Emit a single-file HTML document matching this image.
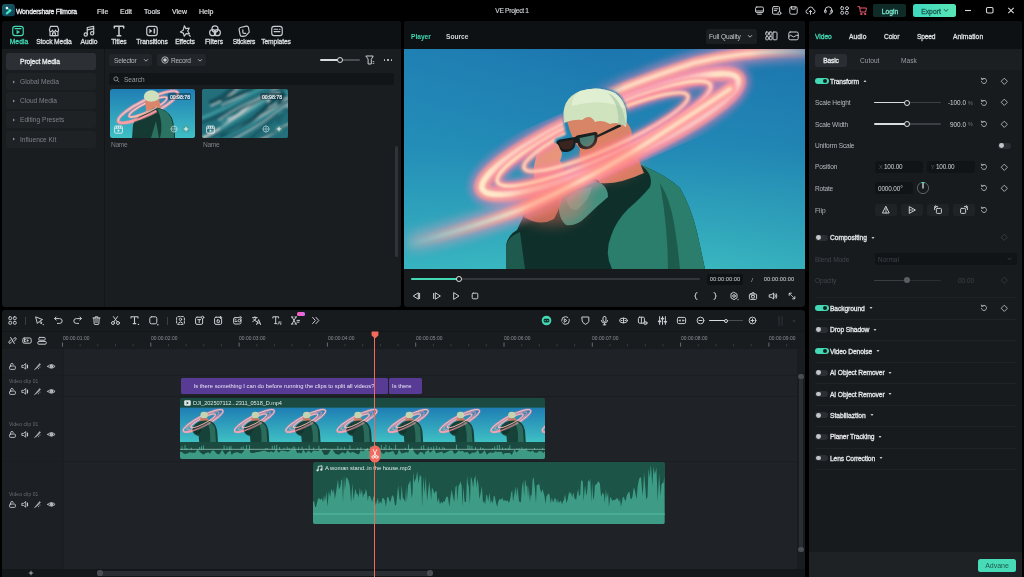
<!DOCTYPE html><html><head><meta charset="utf-8"><title>VE Project 1</title><style>
*{box-sizing:border-box;margin:0;padding:0}
html,body{width:1024px;height:577px;overflow:hidden;background:#000}
body{position:relative;font-family:"Liberation Sans",sans-serif;color:#cfd2d5;font-size:7px;line-height:1}
.abs{position:absolute}
.t{position:absolute;white-space:nowrap;line-height:10px;height:10px;will-change:transform}
.panel{position:absolute;background:#15181b;border-radius:3px;overflow:hidden}
svg{position:absolute;overflow:visible}
.ic{stroke:#c9ccd0;fill:none;stroke-width:1;stroke-linecap:round;stroke-linejoin:round}
</style></head><body>
<svg width="0" height="0" style="position:absolute"><defs>
<linearGradient id="sky" x1="0" y1="0" x2="0" y2="1"><stop offset="0" stop-color="#1c76af"/><stop offset=".45" stop-color="#2288b5"/><stop offset="1" stop-color="#3bbac0"/></linearGradient>
<linearGradient id="sky2" x1="0" y1="0" x2="1" y2="0"><stop offset="0" stop-color="#2aa0c0" stop-opacity=".25"/><stop offset=".5" stop-color="#2aa0c0" stop-opacity="0"/><stop offset="1" stop-color="#1a70a8" stop-opacity=".15"/></linearGradient>
<filter id="b1" x="-20%" y="-20%" width="140%" height="140%"><feGaussianBlur stdDeviation=".8"/></filter>
<filter id="b15" x="-20%" y="-20%" width="140%" height="140%"><feGaussianBlur stdDeviation="1.4"/></filter>
<linearGradient id="gBL" x1="0" y1="0" x2="401" y2="0" gradientUnits="userSpaceOnUse"><stop offset="0" stop-color="#fff" stop-opacity="0"/><stop offset=".1" stop-color="#fff" stop-opacity=".4"/><stop offset=".3" stop-color="#fff" stop-opacity="1"/><stop offset="1" stop-color="#fff"/></linearGradient>
<linearGradient id="gTR" x1="0" y1="0" x2="401" y2="0" gradientUnits="userSpaceOnUse"><stop offset=".4" stop-color="#fff" stop-opacity="0"/><stop offset=".55" stop-color="#fff" stop-opacity="1"/><stop offset=".86" stop-color="#fff" stop-opacity="1"/><stop offset="1" stop-color="#fff" stop-opacity=".35"/></linearGradient>
<mask id="mBL" maskUnits="userSpaceOnUse" x="-20" y="-20" width="441" height="260"><rect x="-20" y="-20" width="441" height="260" fill="url(#gBL)"/></mask>
<mask id="mTR" maskUnits="userSpaceOnUse" x="-20" y="-20" width="441" height="260"><rect x="-20" y="-20" width="441" height="260" fill="url(#gTR)"/></mask>
<filter id="b2" x="-20%" y="-20%" width="140%" height="140%"><feGaussianBlur stdDeviation="1.8"/></filter>
<filter id="b3" x="-20%" y="-20%" width="140%" height="140%"><feGaussianBlur stdDeviation="3"/></filter>
<filter id="b4" x="-20%" y="-20%" width="140%" height="140%"><feGaussianBlur stdDeviation="4"/></filter>
<filter id="b6" x="-50%" y="-50%" width="200%" height="200%"><feGaussianBlur stdDeviation="7"/></filter>
<mask id="headmask" maskUnits="userSpaceOnUse" x="0" y="0" width="401" height="220"><rect width="401" height="220" fill="#fff"/><path d="M160 76 Q155 50 176 41 Q194 35 212 43 Q227 54 223 80 L218 84 L194 94 Q190 102 180 103 Q168 104 156 103 Q150 100 151 90 L162 86 Z" fill="#000" filter="url(#b1)"/></mask>
<linearGradient id="sky3" x1="0" y1="0" x2="0" y2="1"><stop offset="0" stop-color="#1f7eb4"/><stop offset="1" stop-color="#3fc0c4"/></linearGradient><filter id="bt" x="-20%" y="-50%" width="140%" height="200%"><feGaussianBlur stdDeviation=".7"/></filter>

<symbol id="scene" viewBox="0 0 401 220" preserveAspectRatio="none">
<rect width="401" height="220" fill="url(#sky)"/>
<rect width="401" height="220" fill="url(#sky2)"/>

<g>
<path d="M102 220 L102 196 Q104 186 113 181 L120 166 Q124 150 131 140 L160 138 Q175 132 190 126 L237 116 Q262 126 276 139 Q287 158 293 183 L301 220 Z" fill="#0e2f2a"/>
<path d="M237 116 Q262 126 276 139 Q287 158 293 183 L301 220 L208 220 Q200 204 207 187 Q212 172 224 160 Q238 148 246 138 Q250 126 237 116Z" fill="#2b7d6c"/>
<path d="M256 134 Q266 150 270 174 Q274 198 276 220 L264 220 Q264 180 256 134Z" fill="#1b5548" opacity=".85"/>
<path d="M156 146 Q170 134 192 132 Q204 136 204 148 Q192 158 182 168 Q172 178 162 176 Q152 168 156 146Z" fill="#43907f"/>
<path d="M162 150 Q172 140 188 138 Q186 150 174 160 Q166 164 162 150Z" fill="#5fae9a" opacity=".7"/>
<path d="M102 196 Q106 186 116 183 L121 220 L102 220Z" fill="#1f5a4e"/>
<path d="M188 112 L234 108 Q238 120 240 124 Q214 136 196 134 Q188 126 188 112Z" fill="#d27d62"/>
<path d="M163 72 Q162 52 176 45 Q192 38 208 44 Q222 52 222 72 L226 78 Q230 86 226 96 L226 112 Q214 126 198 130 Q186 130 180 118 Q174 110 176 100 Q168 92 163 72Z" fill="#d88466"/>
<path d="M160 74 Q156 50 176 42 Q194 36 211 44 Q226 54 222 78 Q214 72 206 75 Q198 70 191 73 Q186 64 178 71 Q170 70 160 74Z" fill="#cfe3bf"/>
<path d="M176 42 Q194 36 211 44 Q219 50 221 60 Q200 48 168 57 Q167 48 176 42Z" fill="#e4f0d6" opacity=".8"/>
<path d="M152.5 95 Q152 91 156 90.5 L171 88 L173 86.5 L191 83 Q194 83 193.5 86 L216 75 L217 77.5 L193.5 88.5 Q193 98 184 100 Q175 101.5 173.5 94 L171.5 94 Q171 102 163 103 Q153 104 152.5 95Z" fill="#141d1d"/>
<path d="M175.5 89 L190.5 86 Q191.5 95 184 97.5 Q176 98.5 175.5 89Z" fill="#3d7d74"/>
<path d="M155 93 L169.5 90.5 Q169.5 99.5 163 100.5 Q155.5 101 155 93Z" fill="#3a2420"/>
<path d="M222 76 Q218 50 204 44 Q216 56 214 76Z" fill="#a9c8a8" opacity=".7"/>
<path d="M131 140 Q128 120 132 108 Q136 96 146 94 Q154 92 156 100 Q160 104 156 112 Q162 118 158 126 Q156 136 160 140 Z" fill="#e8957c"/>
<path d="M120 168 Q124 150 131 140 L160 138 Q158 156 150 170 Q136 178 120 168Z" fill="#c9705c" opacity=".85"/>
</g>
<g mask="url(#headmask)"><g opacity="1"><ellipse cx="206" cy="85" rx="139" ry="27" transform="rotate(-23.3 206 85)" fill="none" stroke="#f77fb8" stroke-width="25.0" filter="url(#b3)" opacity=".5"/><ellipse cx="206" cy="85" rx="139" ry="27" transform="rotate(-23.3 206 85)" fill="none" stroke="#ff9c98" stroke-width="15.625" filter="url(#b2)" opacity=".9"/><ellipse cx="206" cy="85" rx="139" ry="27" transform="rotate(-23.3 206 85)" fill="none" stroke="#ffe9c8" stroke-width="6.25" filter="url(#b1)"/></g><g opacity="1"><ellipse cx="200" cy="84.5" rx="117" ry="22" transform="rotate(-24.5 200 84.5)" fill="none" stroke="#f77fb0" stroke-width="10.8" filter="url(#b3)" opacity=".5"/><ellipse cx="200" cy="84.5" rx="117" ry="22" transform="rotate(-24.5 200 84.5)" fill="none" stroke="#ff9c94" stroke-width="6.75" filter="url(#b2)" opacity=".9"/><ellipse cx="200" cy="84.5" rx="117" ry="22" transform="rotate(-24.5 200 84.5)" fill="none" stroke="#ffe9c8" stroke-width="2.7" filter="url(#b1)"/></g><g opacity="1"><ellipse cx="202" cy="83" rx="89.5" ry="16.5" transform="rotate(-23.9 202 83)" fill="none" stroke="#f77fb0" stroke-width="8.4" filter="url(#b3)" opacity=".5"/><ellipse cx="202" cy="83" rx="89.5" ry="16.5" transform="rotate(-23.9 202 83)" fill="none" stroke="#ff9c94" stroke-width="5.25" filter="url(#b2)" opacity=".9"/><ellipse cx="202" cy="83" rx="89.5" ry="16.5" transform="rotate(-23.9 202 83)" fill="none" stroke="#ffe9c8" stroke-width="2.1" filter="url(#b1)"/></g><path d="M250 28 Q300 10 345 4 Q375 1 400 2" fill="none" stroke="#ffb0c8" stroke-width="12" stroke-linecap="round" opacity=".35" filter="url(#b6)"/><g opacity="1" mask="url(#mTR)"><path d="M168 62 Q215 38 290 14 Q345 0 404 3" fill="none" stroke-linecap="round" stroke="#f587b8" stroke-width="19.5" filter="url(#b4)" opacity=".55"/><path d="M168 62 Q215 38 290 14 Q345 0 404 3" fill="none" stroke-linecap="round" stroke="#ffa09a" stroke-width="11.25" filter="url(#b2)" opacity=".9"/><path d="M168 62 Q215 38 290 14 Q345 0 404 3" fill="none" stroke-linecap="round" stroke="#ffe2c6" stroke-width="4.125" filter="url(#b15)"/></g><path d="M10 192 Q70 178 118 160 Q160 143 190 126" fill="none" stroke="#ffb0c0" stroke-width="16" stroke-linecap="round" opacity=".38" filter="url(#b6)"/><g opacity="1" mask="url(#mBL)"><path d="M6 195 Q70 178 118 160 Q190 128 246 92 Q290 64 326 40" fill="none" stroke-linecap="round" stroke="#f587b8" stroke-width="20.8" filter="url(#b4)" opacity=".55"/><path d="M6 195 Q70 178 118 160 Q190 128 246 92 Q290 64 326 40" fill="none" stroke-linecap="round" stroke="#ffa09a" stroke-width="12.0" filter="url(#b2)" opacity=".9"/><path d="M6 195 Q70 178 118 160 Q190 128 246 92 Q290 64 326 40" fill="none" stroke-linecap="round" stroke="#ffe2c6" stroke-width="4.4" filter="url(#b15)"/></g></g><ellipse cx="148" cy="152" rx="36" ry="24" fill="#ff7a66" opacity=".4" filter="url(#b6)"/><ellipse cx="205" cy="110" rx="32" ry="20" fill="#ff7a66" opacity=".35" filter="url(#b6)"/></symbol>
<symbol id="tscene" viewBox="0 0 52 34" preserveAspectRatio="none">
<rect width="52" height="34" fill="url(#sky3)"/>
<g transform="rotate(-27 24 13)" fill="none">
<ellipse cx="24" cy="13" rx="22.5" ry="5" stroke="#ff8fb0" stroke-width="2" opacity=".75" filter="url(#bt)"/>
<ellipse cx="24" cy="13" rx="22.5" ry="5" stroke="#ffd6cc" stroke-width=".7"/>
<ellipse cx="24" cy="13" rx="18" ry="3.9" stroke="#ff9aa8" stroke-width="1.2" opacity=".7" filter="url(#bt)"/>
<ellipse cx="24" cy="13" rx="14" ry="2.9" stroke="#ff8fa8" stroke-width="1.5" opacity=".8" filter="url(#bt)"/>
<ellipse cx="24" cy="13" rx="14" ry="2.9" stroke="#ffd6cc" stroke-width=".6"/>
</g>
<ellipse cx="25" cy="7.2" rx="3.8" ry="3.3" fill="#c3d4b0"/>
<path d="M21.5 10 Q25 11.5 28.5 10 L29.5 13 L20.5 14Z" fill="#c97a60"/>
<path d="M13 22 Q14 16 21 13.5 Q27 11.5 33 14 Q38 17 38.5 26 L39 34 L20 34 L19.5 28 Q14 27 13 22Z" fill="#174239"/>
<path d="M28 14 Q33.5 14.5 36 20 L37 34 L31 34 Q32 22 28 14Z" fill="#2a6b5c"/>
<path d="M13.5 21 Q17 17 22 17 Q24 22 20 26 Q14 26 13.5 21Z" fill="#12362f"/>
<g transform="rotate(-27 24 13)" fill="none" opacity=".9"><path d="M1.5 13 A22.5 5 0 0 0 30 17.8" stroke="#ff9aa8" stroke-width="1.3" filter="url(#bt)"/><path d="M10 13 A14 2.9 0 0 0 30 15.6" stroke="#ffb8b0" stroke-width="1"/></g>
</symbol></defs></svg>
<!-- title bar -->
<svg style="left:1.6px;top:3.7px" width="13" height="12.3" viewBox="0 0 13 12.3"><defs><linearGradient id="lg" x1="0" y1="0" x2="1" y2="1"><stop offset="0" stop-color="#1a5f6a"/><stop offset="1" stop-color="#123f55"/></linearGradient></defs><rect width="13" height="12.3" rx="3" fill="url(#lg)"/><path d="M4.9 4.2 L8.4 6.4" stroke="#2aa99a" stroke-width="2" stroke-linecap="round"/><path d="M8.4 6.4 L4.8 9.3" stroke="#43e8c2" stroke-width="2.2" stroke-linecap="round"/><circle cx="4.9" cy="4.1" r="1.25" fill="#f2fffb"/></svg>
<div class="t" style="left:16.2px;top:7px;font-size:6.8px;color:#eceef0;font-weight:normal;letter-spacing:-0.235px;-webkit-text-stroke:0.3px #eceef0;">Wondershare Filmora</div>
<div class="t" style="left:97px;top:7px;font-size:7px;color:#e0e2e4;font-weight:normal;-webkit-text-stroke:0.15px #e0e2e4;">File</div>
<div class="t" style="left:120px;top:7px;font-size:7px;color:#e0e2e4;font-weight:normal;-webkit-text-stroke:0.15px #e0e2e4;">Edit</div>
<div class="t" style="left:144px;top:7px;font-size:7px;color:#e0e2e4;font-weight:normal;-webkit-text-stroke:0.15px #e0e2e4;">Tools</div>
<div class="t" style="left:172px;top:7px;font-size:7px;color:#e0e2e4;font-weight:normal;-webkit-text-stroke:0.15px #e0e2e4;">View</div>
<div class="t" style="left:198.5px;top:7px;font-size:7px;color:#e0e2e4;font-weight:normal;-webkit-text-stroke:0.15px #e0e2e4;">Help</div>
<div class="t" style="left:361.66313932291666px;width:300px;text-align:center;top:6px;font-size:6.6px;color:#d0d3d6;font-weight:normal;letter-spacing:-0.274px;-webkit-text-stroke:0.15px #d0d3d6;">VE Project 1</div>
<div class="abs" style="left:873px;top:4px;width:33px;height:13px;background:#0f2b27;border-radius:2px;"></div>
<div class="t" style="left:739.5px;width:300px;text-align:center;top:7px;font-size:6.8px;color:#7be6cb;font-weight:normal;-webkit-text-stroke:0.3px #7be6cb;">Login</div>
<div class="abs" style="left:912.5px;top:4px;width:43px;height:13px;background:linear-gradient(90deg,#3fd9c0,#58e6b4);border-radius:2.5px;"></div>
<div class="t" style="left:781px;width:300px;text-align:center;top:7px;font-size:6.8px;color:#1d5a4e;font-weight:normal;-webkit-text-stroke:0.3px #1d5a4e;">Export</div>
<svg style="left:943px;top:8px" width="6" height="5" viewBox="0 0 6 5"><path d="M1 1.2 L3 3.4 L5 1.2" stroke="#1d5a4e" stroke-width="1" fill="none"/></svg>
<svg style="left:960px;top:2px" width="60" height="17" viewBox="960 2 60 17"><path d="M965 10.5 H971" stroke="#d6d8da" stroke-width="1.1"/><rect x="986.5" y="7.5" width="6.5" height="5.5" rx="1.2" stroke="#d6d8da" stroke-width="1.1" fill="none"/><path d="M1008.3 7.8 L1013.7 13.2 M1013.7 7.8 L1008.3 13.2" stroke="#d6d8da" stroke-width="1.1"/></svg>
<svg style="left:753.5px;top:5px" width="11" height="11" viewBox="0 0 11 11" class="ic" stroke="#c9ccd0" stroke-width=".9"><rect x="1.6" y="2" width="7.8" height="5.6" rx="1.2"/><path d="M3.6 9.2 H7.4 M1.6 6 H9.4"/></svg>
<svg style="left:770.5px;top:5px" width="11" height="11" viewBox="0 0 11 11" class="ic" stroke="#c9ccd0" stroke-width=".9"><rect x="1.6" y="1.6" width="7" height="7.6" rx="1.2"/><path d="M3.2 3.8 H7 M3.2 5.6 H5.6"/><circle cx="8.4" cy="8.2" r="1.5" fill="#000"/></svg>
<svg style="left:787.5px;top:5px" width="11" height="11" viewBox="0 0 11 11" class="ic" stroke="#c9ccd0" stroke-width=".9"><rect x="1.8" y="1.8" width="7.4" height="7.4" rx="1.6"/><path d="M3.6 1.8 V4.2 H7.2 V1.8"/></svg>
<svg style="left:805.2px;top:5px" width="11" height="11" viewBox="0 0 11 11" class="ic" stroke="#c9ccd0" stroke-width=".9"><path d="M3 8.6 Q1 8.6 1 6.6 Q1 4.8 2.8 4.6 Q3.2 2 5.6 2 Q8 2 8.3 4.4 Q10 4.6 10 6.6 Q10 8.6 8 8.6"/><path d="M5.5 9.4 V5.6 M4.2 6.8 L5.5 5.5 L6.8 6.8"/></svg>
<svg style="left:822.5px;top:5px" width="11" height="11" viewBox="0 0 11 11" class="ic" stroke="#c9ccd0" stroke-width=".9"><path d="M2.2 6 V5 Q2.2 1.8 5.5 1.8 Q8.8 1.8 8.8 5 V6"/><rect x="1.6" y="5" width="1.6" height="2.8" rx=".7"/><rect x="7.8" y="5" width="1.6" height="2.8" rx=".7"/><path d="M8.6 7.8 Q8.6 9.2 6.4 9.2"/></svg>
<svg style="left:839.0px;top:5px" width="11" height="11" viewBox="0 0 11 11" class="ic" stroke="#c9ccd0" stroke-width=".9"><rect x="1.8" y="1.8" width="2.8" height="2.8" rx=".9"/><circle cx="8" cy="3.2" r="1.5"/><rect x="1.8" y="6.4" width="2.8" height="2.8" rx=".9"/><rect x="6.4" y="6.4" width="2.8" height="2.8" rx=".9"/></svg>
<svg style="left:856.5px;top:5px" width="11" height="11" viewBox="0 0 11 11" fill="none" stroke="url(#cartg)" stroke-width="1" stroke-linecap="round" stroke-linejoin="round"><defs><linearGradient id="cartg" x1="0" y1="0" x2="1" y2="1" gradientUnits="userSpaceOnUse"><stop offset="0" stop-color="#ff5a8a"/><stop offset="1" stop-color="#ff8a4a"/></linearGradient></defs><path d="M1 1.6 H2.6 L3.4 7 H8.6 L9.4 3 H3" stroke="#f0566e"/><circle cx="4.2" cy="9" r=".7" stroke="#f0566e"/><circle cx="8" cy="9" r=".7" stroke="#f0566e"/></svg>
<!-- media panel -->
<div class="panel" style="left:2px;top:21px;width:399px;height:285.5px;background:#1a1d20"></div>
<div class="abs" style="left:2px;top:21px;width:399px;height:28px;background:#0e1114;border-radius:0px;border-radius:3px 3px 0 0"></div>
<div class="t" style="left:-131.2649125px;width:300px;text-align:center;top:37px;font-size:6.7px;color:#42d9b4;font-weight:normal;letter-spacing:0.070px;-webkit-text-stroke:0.3px #42d9b4;">Media</div>
<div class="t" style="left:-96.26214879261363px;width:300px;text-align:center;top:37px;font-size:6.7px;color:#dcdfe2;font-weight:normal;letter-spacing:-0.124px;-webkit-text-stroke:0.3px #dcdfe2;">Stock Media</div>
<div class="t" style="left:-61.413682031250005px;width:300px;text-align:center;top:37px;font-size:6.7px;color:#dcdfe2;font-weight:normal;letter-spacing:-0.027px;-webkit-text-stroke:0.3px #dcdfe2;">Audio</div>
<div class="t" style="left:-31.138261067708328px;width:300px;text-align:center;top:37px;font-size:6.7px;color:#dcdfe2;font-weight:normal;letter-spacing:-0.077px;-webkit-text-stroke:0.3px #dcdfe2;">Titles</div>
<div class="t" style="left:1.649109019886339px;width:300px;text-align:center;top:37px;font-size:6.7px;color:#dcdfe2;font-weight:normal;letter-spacing:-0.102px;-webkit-text-stroke:0.3px #dcdfe2;">Transitions</div>
<div class="t" style="left:34.53867299107142px;width:300px;text-align:center;top:37px;font-size:6.7px;color:#dcdfe2;font-weight:normal;letter-spacing:-0.123px;-webkit-text-stroke:0.3px #dcdfe2;">Effects</div>
<div class="t" style="left:64.48291573660714px;width:300px;text-align:center;top:37px;font-size:6.7px;color:#dcdfe2;font-weight:normal;letter-spacing:-0.034px;-webkit-text-stroke:0.3px #dcdfe2;">Filters</div>
<div class="t" style="left:94.11082031249998px;width:300px;text-align:center;top:37px;font-size:6.7px;color:#dcdfe2;font-weight:normal;letter-spacing:-0.178px;-webkit-text-stroke:0.3px #dcdfe2;">Stickers</div>
<div class="t" style="left:126.45350998263888px;width:300px;text-align:center;top:37px;font-size:6.7px;color:#dcdfe2;font-weight:normal;letter-spacing:-0.093px;-webkit-text-stroke:0.3px #dcdfe2;">Templates</div>
<svg style="left:11.399999999999999px;top:23.5px" width="14" height="14" viewBox="0 0 12 12" class="ic" stroke="#d3d6d9" stroke-width=".95"><rect x="1.5" y="2" width="9" height="8" rx="2" stroke="#42d9b4"/><path d="M3.5 4 H8.5" stroke="#42d9b4"/><path d="M5.2 5.6 L7.4 6.9 L5.2 8.2 Z" fill="#42d9b4" stroke="#42d9b4" stroke-width=".5"/></svg>
<svg style="left:46.6px;top:23.5px" width="14" height="14" viewBox="0 0 12 12" class="ic" stroke="#d3d6d9" stroke-width=".95"><path d="M2 5 L3 2 H9 L10 5 Q10 6.5 8.7 6.5 Q7.4 6.5 7.3 5.2 Q7.2 6.5 6 6.5 Q4.8 6.5 4.7 5.2 Q4.6 6.5 3.3 6.5 Q2 6.5 2 5 Z"/><path d="M2.6 6.5 V10 H9.4 V6.5"/><rect x="4.8" y="7.6" width="2.4" height="2.4"/></svg>
<svg style="left:81.5px;top:23.5px" width="14" height="14" viewBox="0 0 12 12" class="ic" stroke="#d3d6d9" stroke-width=".95"><path d="M4.5 9 V3 L10 2 V8"/><circle cx="3.2" cy="9" r="1.4"/><circle cx="8.7" cy="8" r="1.4"/><path d="M4.5 5 L10 4"/></svg>
<svg style="left:111.9px;top:23.5px" width="14" height="14" viewBox="0 0 12 12" class="ic" stroke="#d3d6d9" stroke-width=".95"><path d="M2 3.5 V2 H10 V3.5 M6 2 V10 M4.5 10 H7.5" stroke-width="1.3"/></svg>
<svg style="left:144.5px;top:23.5px" width="14" height="14" viewBox="0 0 12 12" class="ic" stroke="#d3d6d9" stroke-width=".95"><rect x="1.5" y="2" width="9" height="8" rx="2"/><path d="M4 4.5 L6 6 L4 7.5 Z" fill="#d3d6d9" stroke-width=".4"/><path d="M8 4.3 V7.7" stroke-width="1.3"/></svg>
<svg style="left:177.6px;top:23.5px" width="14" height="14" viewBox="0 0 12 12" class="ic" stroke="#d3d6d9" stroke-width=".95"><path d="M5.5 1.5 L6.8 4 L9.6 3.6 L8.3 6 L9.8 8.4 L7 8.2 L5.4 10.5 L4.6 7.8 L2 6.8 L4.4 5.4 Z"/><path d="M9.5 9.5 L10.5 10.5" /></svg>
<svg style="left:207.5px;top:23.5px" width="14" height="14" viewBox="0 0 12 12" class="ic" stroke="#d3d6d9" stroke-width=".95"><circle cx="6" cy="4.2" r="2.6"/><circle cx="4" cy="7.4" r="2.6"/><circle cx="8" cy="7.4" r="2.6"/></svg>
<svg style="left:237.4px;top:23.5px" width="14" height="14" viewBox="0 0 12 12" class="ic" stroke="#d3d6d9" stroke-width=".95"><path d="M3 3 L8 1.8 Q9.5 1.6 9.8 3 L10.5 7 L7.5 10.2 L4.5 10.6 Q3 10.8 2.7 9.4 L1.8 4.8 Q1.6 3.4 3 3 Z"/><path d="M5 5 V7 Q5 8 6 8 H7.5"/></svg>
<svg style="left:269.5px;top:23.5px" width="14" height="14" viewBox="0 0 12 12" class="ic" stroke="#d3d6d9" stroke-width=".95"><rect x="1.5" y="2" width="9" height="8" rx="2"/><path d="M3.5 4.5 H6.5 M3.5 6.5 H8.5 M8 4.5 H8.6" /></svg>
<div class="abs" style="left:104px;top:49px;width:1px;height:257.5px;background:#131619;border-radius:0px;"></div>
<div class="abs" style="left:6px;top:53px;width:90px;height:17px;background:#2c3034;border-radius:3px;"></div>
<div class="t" style="left:20px;top:57px;font-size:6.7px;color:#e8eaec;font-weight:normal;letter-spacing:-0.074px;-webkit-text-stroke:0.3px #e8eaec;">Project Media</div>
<div class="abs" style="left:6px;top:73px;width:90px;height:17px;background:#1f2225;border-radius:3px;"></div>
<div class="t" style="left:20px;top:77px;font-size:6.6px;color:#7d8288;font-weight:normal;">Global Media</div>
<svg style="left:12px;top:79.5px" width="4" height="4" viewBox="0 0 4 4"><path d="M1 .6 L3 2 L1 3.4 Z" fill="#8a8f95"/></svg>
<div class="abs" style="left:6px;top:92px;width:90px;height:17px;background:#1f2225;border-radius:3px;"></div>
<div class="t" style="left:20px;top:96px;font-size:6.6px;color:#7d8288;font-weight:normal;">Cloud Media</div>
<svg style="left:12px;top:98.5px" width="4" height="4" viewBox="0 0 4 4"><path d="M1 .6 L3 2 L1 3.4 Z" fill="#8a8f95"/></svg>
<div class="abs" style="left:6px;top:111px;width:90px;height:17px;background:#1f2225;border-radius:3px;"></div>
<div class="t" style="left:20px;top:115px;font-size:6.6px;color:#7d8288;font-weight:normal;">Editing Presets</div>
<svg style="left:12px;top:117.5px" width="4" height="4" viewBox="0 0 4 4"><path d="M1 .6 L3 2 L1 3.4 Z" fill="#8a8f95"/></svg>
<div class="abs" style="left:6px;top:130.5px;width:90px;height:17px;background:#1f2225;border-radius:3px;"></div>
<div class="t" style="left:20px;top:135px;font-size:6.6px;color:#7d8288;font-weight:normal;">Influence Kit</div>
<svg style="left:12px;top:137.0px" width="4" height="4" viewBox="0 0 4 4"><path d="M1 .6 L3 2 L1 3.4 Z" fill="#8a8f95"/></svg>
<div class="abs" style="left:109.4px;top:53.7px;width:42.3px;height:12.6px;background:#22262a;border-radius:2.5px;"></div>
<div class="t" style="left:114px;top:56px;font-size:6.6px;color:#b4b8bc;font-weight:normal;letter-spacing:-0.202px;">Selector</div>
<svg style="left:142.6px;top:57.6px" width="6" height="5" viewBox="0 0 6 5"><path d="M1 1.2 L3 3.2 L5 1.2" stroke="#b4b8bc" stroke-width=".9" fill="none"/></svg>
<div class="abs" style="left:156.6px;top:53.7px;width:49px;height:12.6px;background:#22262a;border-radius:2.5px;"></div>
<svg style="left:160.7px;top:56px" width="8" height="8" viewBox="0 0 8 8"><circle cx="4" cy="4" r="3.2" stroke="#c9ccd0" stroke-width=".8" fill="none"/><circle cx="4" cy="4" r="1.8" fill="#c9ccd0"/></svg>
<div class="t" style="left:171.4px;top:56px;font-size:6.6px;color:#b4b8bc;font-weight:normal;letter-spacing:-0.279px;">Record</div>
<svg style="left:196.5px;top:57.6px" width="6" height="5" viewBox="0 0 6 5"><path d="M1 1.2 L3 3.2 L5 1.2" stroke="#b4b8bc" stroke-width=".9" fill="none"/></svg>
<div class="abs" style="left:320px;top:59px;width:20px;height:1.5px;background:#d9dbdd;border-radius:1px;"></div>
<div class="abs" style="left:340px;top:59px;width:20px;height:1.5px;background:#4a4e53;border-radius:1px;"></div>
<div class="abs" style="left:337.3px;top:56.8px;width:6px;height:6px;border-radius:50%;background:#1a1d20;border:1.2px solid #d9dbdd"></div>
<svg style="left:365px;top:55px" width="10" height="10" viewBox="0 0 10 10" class="ic"><path d="M1.2 1 H8.2 L6.3 4.4 V9 H3.1 V4.4 Z" stroke-width="1"/><path d="M8 6.6 h.9 M8 8.4 h.9" stroke-width=".8"/></svg>
<div class="abs" style="left:383.8px;top:59px;width:1.5px;height:1.5px;border-radius:50%;background:#c9ccd0"></div>
<div class="abs" style="left:387.3px;top:59px;width:1.5px;height:1.5px;border-radius:50%;background:#c9ccd0"></div>
<div class="abs" style="left:390.8px;top:59px;width:1.5px;height:1.5px;border-radius:50%;background:#c9ccd0"></div>
<div class="abs" style="left:109px;top:73px;width:285px;height:11.7px;background:#121518;border-radius:2.5px;"></div>
<svg style="left:113px;top:76px" width="7" height="7" viewBox="0 0 7 7"><circle cx="2.9" cy="2.9" r="2" stroke="#9a9ea3" stroke-width=".8" fill="none"/><path d="M4.4 4.4 L6.2 6.2" stroke="#9a9ea3" stroke-width=".8"/></svg>
<div class="t" style="left:123.5px;top:75px;font-size:6.5px;color:#9a9ea3;font-weight:normal;">Search</div>
<div class="abs" style="left:394.8px;top:146px;width:3.2px;height:111px;background:#303438;border-radius:1.6px;"></div>
<div class="abs" style="left:109.6px;top:89.3px;width:85.7px;height:48.4px;border-radius:2.5px;overflow:hidden">
<svg style="left:0;top:0" width="86" height="49" viewBox="0 0 86 49">
<rect width="86" height="49" fill="url(#sky3)"/>
<g transform="rotate(-26 38 18)" fill="none">
<ellipse cx="38" cy="18" rx="33" ry="7.5" stroke="#ff8fa8" stroke-width="3.4" opacity=".75" filter="url(#bt)"/>
<ellipse cx="38" cy="18" rx="33" ry="7.5" stroke="#ffc9c0" stroke-width="1.3" filter="url(#bt)"/>
<ellipse cx="38" cy="18" rx="21" ry="4.4" stroke="#ff8fa8" stroke-width="2.6" opacity=".8" filter="url(#bt)"/>
<ellipse cx="38" cy="18" rx="21" ry="4.4" stroke="#ffd0c0" stroke-width="1"/>
</g>
<ellipse cx="41.5" cy="7.6" rx="7.6" ry="6.4" fill="#cfe0bc"/>
<path d="M35 11 Q42 15 49 10 L51 19 L36 22Z" fill="#d9866a"/>
<path d="M22 49 L23 36 Q25 29 33 25 L45 18 Q57 20 62 29 Q65 38 65 49Z" fill="#143a33"/>
<path d="M47 19 Q57 21 61 29 Q64 38 64 49 L50 49 Q54 34 47 19Z" fill="#2c7263"/>
<path d="M41 49 L46 32 L49 49Z" fill="#2f7d6a" opacity=".8"/>
<g transform="rotate(-26 38 18)" fill="none"><path d="M5 18 A33 7.5 0 0 0 44 25.3" stroke="#ff9aa0" stroke-width="2.4" filter="url(#bt)"/><path d="M17 18 A21 4.4 0 0 0 46 22" stroke="#ffb8a8" stroke-width="1.6" filter="url(#bt)"/></g>
</svg>
</div>
<div class="abs" style="left:201.9px;top:89.3px;width:85.7px;height:48.4px;border-radius:2.5px;overflow:hidden;background:#256f7a">
<svg style="left:0;top:0" width="86" height="49" viewBox="0 0 86 49">
<filter id="bm" x="-20%" y="-20%" width="140%" height="140%"><feGaussianBlur stdDeviation="1"/></filter>
<rect width="86" height="49" fill="#23707c"/>
<g filter="url(#bm)" fill="none" stroke-linecap="round"><path d="M20 47 Q52 41 84 15 T112 8" stroke="#11505b" stroke-width="4.7" opacity="0.91"/><path d="M9 17 Q32 8 56 -21 T74 -25" stroke="#b8bfc0" stroke-width="1.6" opacity="0.90"/><path d="M20 33 Q42 26 63 11 T90 8" stroke="#3b949c" stroke-width="3.5" opacity="0.64"/><path d="M25 69 Q49 56 74 42 T102 35" stroke="#9fb4b6" stroke-width="3.2" opacity="0.94"/><path d="M2 64 Q27 55 53 34 T79 28" stroke="#2f8a94" stroke-width="4.8" opacity="0.79"/><path d="M-7 52 Q18 43 43 20 T67 17" stroke="#c2caca" stroke-width="3.0" opacity="0.94"/><path d="M20 11 Q53 1 85 -19 T112 -25" stroke="#0f4651" stroke-width="3.3" opacity="0.83"/><path d="M28 47 Q50 32 72 18 T89 12" stroke="#9fb4b6" stroke-width="4.7" opacity="0.86"/><path d="M20 16 Q52 1 84 -8 T101 -14" stroke="#c2caca" stroke-width="1.3" opacity="0.92"/><path d="M27 30 Q55 21 83 -9 T106 -17" stroke="#c2caca" stroke-width="3.8" opacity="0.67"/><path d="M19 39 Q40 29 61 12 T83 3" stroke="#3b949c" stroke-width="3.2" opacity="0.73"/><path d="M-8 35 Q26 26 60 9 T89 2" stroke="#0f4651" stroke-width="4.2" opacity="0.60"/><path d="M7 64 Q29 49 52 35 T71 25" stroke="#1b606c" stroke-width="1.8" opacity="0.89"/><path d="M8 69 Q35 60 63 38 T76 33" stroke="#1b606c" stroke-width="3.0" opacity="0.95"/><path d="M15 68 Q43 57 70 34 T91 28" stroke="#1b606c" stroke-width="1.9" opacity="0.58"/><path d="M4 58 Q33 48 62 20 T77 14" stroke="#0f4651" stroke-width="4.1" opacity="0.86"/><path d="M2 51 Q36 37 70 19 T96 14" stroke="#11505b" stroke-width="1.9" opacity="0.66"/><path d="M10 27 Q40 15 70 -11 T97 -16" stroke="#1b606c" stroke-width="2.5" opacity="0.89"/><path d="M18 62 Q52 51 87 37 T114 27" stroke="#1b606c" stroke-width="3.2" opacity="0.74"/><path d="M19 51 Q50 36 81 18 T109 14" stroke="#2f8a94" stroke-width="3.5" opacity="0.77"/><path d="M1 62 Q36 52 71 26 T85 18" stroke="#9fb4b6" stroke-width="1.8" opacity="0.80"/><path d="M9 13 Q32 5 56 -31 T75 -37" stroke="#0f4651" stroke-width="4.6" opacity="0.72"/><path d="M17 31 Q38 16 59 9 T77 5" stroke="#9fb4b6" stroke-width="2.1" opacity="0.71"/><path d="M23 17 Q49 8 74 -12 T95 -21" stroke="#0f4651" stroke-width="3.3" opacity="0.67"/><path d="M-5 31 Q21 21 47 6 T69 -1" stroke="#3b949c" stroke-width="3.6" opacity="0.93"/><path d="M14 68 Q40 61 65 34 T87 31" stroke="#11505b" stroke-width="1.2" opacity="0.80"/></g></svg>
</div>
<div class="abs" style="left:168.1px;top:93.3px;width:23px;height:7px;border-radius:1.5px;background:rgba(20,40,50,.45)"></div>
<div class="t" style="left:29.599999999999994px;width:300px;text-align:center;top:92px;font-size:5.2px;color:#eef2f4;font-weight:normal;-webkit-text-stroke:0.15px #eef2f4;">00:98:78</div>
<svg style="left:113.8px;top:124.5px" width="9" height="9" viewBox="0 0 9 9" fill="none" stroke="#eef2f3" stroke-width=".8"><rect x=".6" y="1" width="7.8" height="7.2" rx="1.2"/><path d="M.6 3.2 H8.4 M2.6 1 V3.2 M4.5 1 V3.2 M6.4 1 V3.2"/><path d="M3.8 4.6 L5.6 5.7 L3.8 6.8Z" fill="#eef2f3" stroke-width=".3"/></svg>
<svg style="left:170.1px;top:125px" width="8" height="8" viewBox="0 0 8 8" fill="none" stroke="#dfe6e6" stroke-width=".7" opacity=".8"><circle cx="4" cy="4" r="3"/><circle cx="4" cy="4" r="1.2"/><path d="M4 .4 V2 M4 6 V7.6 M.4 4 H2 M6 4 H7.6"/></svg>
<svg style="left:182.39999999999998px;top:125px" width="8" height="8" viewBox="0 0 8 8"><circle cx="4" cy="4" r="3.8" fill="rgba(80,150,140,.45)"/><path d="M4 1.8 V6.2 M1.8 4 H6.2" stroke="#f4f6f6" stroke-width="1"/></svg>
<div class="t" style="left:111.0px;top:140px;font-size:6.6px;color:#7d8288;font-weight:normal;letter-spacing:-0.277px;">Name</div>
<div class="abs" style="left:260.4px;top:93.3px;width:23px;height:7px;border-radius:1.5px;background:rgba(20,40,50,.45)"></div>
<div class="t" style="left:121.89999999999998px;width:300px;text-align:center;top:92px;font-size:5.2px;color:#eef2f4;font-weight:normal;-webkit-text-stroke:0.15px #eef2f4;">00:98:78</div>
<svg style="left:206.1px;top:124.5px" width="9" height="9" viewBox="0 0 9 9" fill="none" stroke="#eef2f3" stroke-width=".8"><rect x=".6" y="1" width="7.8" height="7.2" rx="1.2"/><path d="M.6 3.2 H8.4 M2.6 1 V3.2 M4.5 1 V3.2 M6.4 1 V3.2"/><path d="M3.8 4.6 L5.6 5.7 L3.8 6.8Z" fill="#eef2f3" stroke-width=".3"/></svg>
<svg style="left:262.4px;top:125px" width="8" height="8" viewBox="0 0 8 8" fill="none" stroke="#dfe6e6" stroke-width=".7" opacity=".8"><circle cx="4" cy="4" r="3"/><circle cx="4" cy="4" r="1.2"/><path d="M4 .4 V2 M4 6 V7.6 M.4 4 H2 M6 4 H7.6"/></svg>
<svg style="left:274.7px;top:125px" width="8" height="8" viewBox="0 0 8 8"><circle cx="4" cy="4" r="3.8" fill="rgba(80,150,140,.45)"/><path d="M4 1.8 V6.2 M1.8 4 H6.2" stroke="#f4f6f6" stroke-width="1"/></svg>
<div class="t" style="left:203.3px;top:140px;font-size:6.6px;color:#7d8288;font-weight:normal;letter-spacing:-0.277px;">Name</div>
<!-- preview -->
<div class="panel" style="left:404px;top:21px;width:401px;height:285.5px;background:#181b1e"></div>
<div class="abs" style="left:404px;top:21px;width:401px;height:28px;background:#0e1114;border-radius:0px;border-radius:3px 3px 0 0"></div>
<div class="t" style="left:411px;top:32px;font-size:6.6px;color:#42d9b4;font-weight:bold;">Player</div>
<div class="t" style="left:446px;top:32px;font-size:6.6px;color:#d3d6d9;font-weight:bold;">Source</div>
<div class="abs" style="left:705.5px;top:28.5px;width:51px;height:15px;background:#1b1e21;border-radius:2.5px;"></div>
<div class="t" style="left:709px;top:32px;font-size:6.6px;color:#c3c6ca;font-weight:normal;letter-spacing:-0.109px;">Full Quality</div>
<svg style="left:747px;top:34px" width="6" height="5" viewBox="0 0 6 5"><path d="M1 1.2 L3 3.2 L5 1.2" stroke="#c3c6ca" stroke-width=".9" fill="none"/></svg>
<svg style="left:765px;top:31px" width="13" height="10" viewBox="0 0 13 10" class="ic" stroke-width=".9"><rect x=".8" y="1" width="2.6" height="3.2" rx=".6"/><rect x=".8" y="5.6" width="2.6" height="3.2" rx=".6"/><rect x="4.4" y="1" width="2.6" height="3.2" rx=".6"/><rect x="4.4" y="5.6" width="2.6" height="3.2" rx=".6"/><rect x="8" y="1" width="4" height="7.8" rx=".8"/></svg>
<svg style="left:787.5px;top:31px" width="11" height="10" viewBox="0 0 11 10" class="ic" stroke-width=".9"><rect x=".8" y="1" width="9.4" height="7.8" rx="1.4"/><path d="M.8 5.6 Q2.4 3 4 5 Q5.4 6.8 7 5.2 Q8.6 3.6 10.2 4.4"/></svg>
<svg style="left:404px;top:49px" width="401" height="220" viewBox="0 0 401 220"><clipPath id="vc"><rect width="401" height="220"/></clipPath><g clip-path="url(#vc)"><use href="#scene" width="401" height="220"/></g></svg>
<div class="abs" style="left:411px;top:278.3px;width:289px;height:1.5px;background:#33373b;border-radius:1px;"></div>
<div class="abs" style="left:411px;top:278.3px;width:48px;height:1.5px;background:#42d9b4;border-radius:1px;"></div>
<div class="abs" style="left:456.2px;top:276.2px;width:5.8px;height:5.8px;border-radius:50%;background:#181b1e;border:1.1px solid #e6e8ea"></div>
<div class="abs" style="left:707px;top:273.5px;width:35.5px;height:11.5px;background:#0f1215;border-radius:2px;"></div>
<div class="t" style="left:574.7px;width:300px;text-align:center;top:274px;font-size:5.8px;color:#d3d6d9;font-weight:normal;">00:00:00:00</div>
<div class="t" style="left:602px;width:300px;text-align:center;top:275px;font-size:6px;color:#b4b8bc;font-weight:normal;">/</div>
<div class="t" style="left:628.5px;width:300px;text-align:center;top:274px;font-size:5.8px;color:#d3d6d9;font-weight:normal;">00:00:00:00</div>
<svg style="left:411.0px;top:291.0px" width="10" height="10" viewBox="0 0 10 10" class="ic" stroke-width="0.9"><path d="M7 2 L2.2 5 L7 8 Z"/><path d="M8.6 2.4 V7.6"/></svg>
<svg style="left:432.0px;top:291.0px" width="10" height="10" viewBox="0 0 10 10" class="ic" stroke-width="0.9"><path d="M3.6 2 L8.4 5 L3.6 8 Z"/><path d="M1.6 2.4 V7.6"/></svg>
<svg style="left:451.0px;top:291.0px" width="10" height="10" viewBox="0 0 10 10" class="ic" stroke-width="0.9"><path d="M3 1.8 L8 5 L3 8.2 Z"/></svg>
<svg style="left:469.5px;top:291.0px" width="10" height="10" viewBox="0 0 10 10" class="ic" stroke-width="0.9"><rect x="2.2" y="2.2" width="5.6" height="5.6" rx="1"/></svg>
<svg style="left:691.0px;top:291.0px" width="10" height="10" viewBox="0 0 10 10" class="ic" stroke-width="0.9"><path d="M6 1.6 Q4.6 1.6 4.6 3 V4 Q4.6 5 3.6 5 Q4.6 5 4.6 6 V7 Q4.6 8.4 6 8.4"/></svg>
<svg style="left:710.0px;top:291.0px" width="10" height="10" viewBox="0 0 10 10" class="ic" stroke-width="0.9"><path d="M4 1.6 Q5.4 1.6 5.4 3 V4 Q5.4 5 6.4 5 Q5.4 5 5.4 6 V7 Q5.4 8.4 4 8.4"/></svg>
<svg style="left:729.0px;top:291.0px" width="10" height="10" viewBox="0 0 10 10" class="ic" stroke-width="0.9"><path d="M5 1.4 L8 3.1 V6.9 L5 8.6 L2 6.9 V3.1 Z"/><circle cx="5" cy="5" r="1.3"/><path d="M8.6 8.3 L9.6 8.3 L9.1 9.1Z" fill="#c9ccd0" stroke-width=".3"/></svg>
<svg style="left:748.0px;top:291.0px" width="10" height="10" viewBox="0 0 10 10" class="ic" stroke-width="0.9"><rect x="1.4" y="3" width="7.2" height="5.4" rx="1"/><path d="M3.6 3 L4 1.8 H6 L6.4 3"/><rect x="3.6" y="4.4" width="2.8" height="2.6" rx=".4"/></svg>
<svg style="left:767.5px;top:291.0px" width="10" height="10" viewBox="0 0 10 10" class="ic" stroke-width="0.9"><path d="M1.6 3.8 H3.2 L5.6 2 V8 L3.2 6.2 H1.6 Z"/><path d="M7 3.6 Q8 5 7 6.4 M8.2 2.6 Q9.8 5 8.2 7.4"/></svg>
<svg style="left:787.0px;top:291.0px" width="10" height="10" viewBox="0 0 10 10" class="ic" stroke-width="0.9"><path d="M2.4 2.4 L7.6 7.6" stroke-dasharray="1.4 1.6"/><path d="M2.2 4.4 V2.2 H4.4 M7.8 5.6 V7.8 H5.6"/></svg>
<!-- props -->
<div class="panel" style="left:809px;top:21px;width:213px;height:556px;background:#181b1e;border-radius:3px 3px 0 0"></div>
<div class="abs" style="left:809px;top:21px;width:213px;height:27.5px;background:#0e1114;border-radius:0px;border-radius:3px 3px 0 0"></div>
<div class="abs" style="left:809px;top:48.5px;width:213px;height:21.5px;background:#1c1f22;border-radius:0px;"></div>
<div class="t" style="left:815px;top:32px;font-size:6.7px;color:#42d9b4;font-weight:normal;letter-spacing:-0.043px;-webkit-text-stroke:0.3px #42d9b4;">Video</div>
<div class="t" style="left:849.2px;top:32px;font-size:6.7px;color:#dcdfe2;font-weight:normal;letter-spacing:0.073px;-webkit-text-stroke:0.3px #dcdfe2;">Audio</div>
<div class="t" style="left:884.2px;top:32px;font-size:6.7px;color:#dcdfe2;font-weight:normal;letter-spacing:-0.142px;-webkit-text-stroke:0.3px #dcdfe2;">Color</div>
<div class="t" style="left:917px;top:32px;font-size:6.7px;color:#dcdfe2;font-weight:normal;letter-spacing:-0.235px;-webkit-text-stroke:0.3px #dcdfe2;">Speed</div>
<div class="t" style="left:952.5px;top:32px;font-size:6.7px;color:#dcdfe2;font-weight:normal;letter-spacing:0.045px;-webkit-text-stroke:0.3px #dcdfe2;">Animation</div>
<div class="abs" style="left:815px;top:53.5px;width:32px;height:13px;background:#2a2d31;border-radius:2.5px;"></div>
<div class="t" style="left:680.91158828125px;width:300px;text-align:center;top:56px;font-size:6.7px;color:#e8eaec;font-weight:normal;letter-spacing:-0.177px;-webkit-text-stroke:0.3px #e8eaec;">Basic</div>
<div class="t" style="left:860px;top:56px;font-size:6.6px;color:#9a9ea3;font-weight:normal;">Cutout</div>
<div class="t" style="left:901px;top:56px;font-size:6.6px;color:#9a9ea3;font-weight:normal;">Mask</div>
<div class="abs" style="left:815px;top:77.8px;width:13.5px;height:6.4px;background:#42d9b4;border-radius:3.2px;"></div>
<div class="abs" style="left:822.6px;top:78.7px;width:4.6px;height:4.6px;border-radius:50%;background:#14201d"></div>
<div class="t" style="left:830.2px;top:77px;font-size:6.7px;color:#e4e6e8;font-weight:normal;letter-spacing:-0.153px;-webkit-text-stroke:0.3px #e4e6e8;">Transform</div>
<svg style="left:862.5px;top:79px" width="4" height="4" viewBox="0 0 4 4"><path d="M.5 3.1 L2 .9 L3.5 3.1Z" fill="#c9ccd0"/></svg>
<svg style="left:979.6px;top:77.1px" width="7.8" height="7.8" viewBox="0 0 9 9" fill="none" stroke="#b9bdc1" stroke-width="1" stroke-linecap="round" stroke-linejoin="round"><path d="M2.2 2.6 A3 3 0 1 1 1.6 5.2"/><path d="M1.6 1.2 L2.1 2.8 L3.7 2.5"/></svg>
<svg style="left:999.7px;top:76.7px" width="8.6" height="8.6" viewBox="0 0 9 9" fill="none" stroke="#b9bdc1" stroke-width=".9" stroke-linejoin="round"><path d="M4.5 1.2 L7.8 4.5 L4.5 7.8 L1.2 4.5Z"/></svg>
<div class="t" style="left:815px;top:98px;font-size:6.6px;color:#b4b8bc;font-weight:normal;letter-spacing:-0.169px;">Scale Height</div>
<div class="abs" style="left:874px;top:102.0px;width:33px;height:1.4px;background:#d9dbdd;border-radius:1px;"></div>
<div class="abs" style="left:907px;top:102.0px;width:34px;height:1.4px;background:#3c4045;border-radius:1px;"></div>
<div class="abs" style="left:904.2px;top:99.7px;width:6px;height:6px;border-radius:50%;background:#181b1e;border:1.1px solid #e0e2e4"></div>
<div class="t" style="left:666.3px;width:300px;text-align:right;top:98px;font-size:6.4px;color:#d3d6d9;font-weight:normal;">-100.0</div>
<div class="t" style="left:968.4px;top:98px;font-size:5.4px;color:#6f747a;font-weight:normal;">%</div>
<svg style="left:979.6px;top:98.8px" width="7.8" height="7.8" viewBox="0 0 9 9" fill="none" stroke="#b9bdc1" stroke-width="1" stroke-linecap="round" stroke-linejoin="round"><path d="M2.2 2.6 A3 3 0 1 1 1.6 5.2"/><path d="M1.6 1.2 L2.1 2.8 L3.7 2.5"/></svg>
<svg style="left:999.7px;top:98.4px" width="8.6" height="8.6" viewBox="0 0 9 9" fill="none" stroke="#b9bdc1" stroke-width=".9" stroke-linejoin="round"><path d="M4.5 1.2 L7.8 4.5 L4.5 7.8 L1.2 4.5Z"/></svg>
<div class="t" style="left:815px;top:120px;font-size:6.6px;color:#b4b8bc;font-weight:normal;letter-spacing:-0.201px;">Scale Width</div>
<div class="abs" style="left:874px;top:123.3px;width:33px;height:1.4px;background:#d9dbdd;border-radius:1px;"></div>
<div class="abs" style="left:907px;top:123.3px;width:34px;height:1.4px;background:#3c4045;border-radius:1px;"></div>
<div class="abs" style="left:904.2px;top:121px;width:6px;height:6px;border-radius:50%;background:#181b1e;border:1.1px solid #e0e2e4"></div>
<div class="t" style="left:666.3px;width:300px;text-align:right;top:120px;font-size:6.4px;color:#d3d6d9;font-weight:normal;">900.0</div>
<div class="t" style="left:968.4px;top:119px;font-size:5.4px;color:#6f747a;font-weight:normal;">%</div>
<svg style="left:979.6px;top:120.1px" width="7.8" height="7.8" viewBox="0 0 9 9" fill="none" stroke="#b9bdc1" stroke-width="1" stroke-linecap="round" stroke-linejoin="round"><path d="M2.2 2.6 A3 3 0 1 1 1.6 5.2"/><path d="M1.6 1.2 L2.1 2.8 L3.7 2.5"/></svg>
<svg style="left:999.7px;top:119.7px" width="8.6" height="8.6" viewBox="0 0 9 9" fill="none" stroke="#b9bdc1" stroke-width=".9" stroke-linejoin="round"><path d="M4.5 1.2 L7.8 4.5 L4.5 7.8 L1.2 4.5Z"/></svg>
<div class="t" style="left:815px;top:141px;font-size:6.6px;color:#b4b8bc;font-weight:normal;letter-spacing:-0.158px;">Uniform Scale</div>
<div class="abs" style="left:998px;top:142.7px;width:13px;height:6px;background:#2b2e32;border-radius:3px;"></div>
<div class="abs" style="left:998.8px;top:143.29999999999998px;width:4.8px;height:4.8px;border-radius:50%;background:#c3c6ca"></div>
<div class="t" style="left:815px;top:162px;font-size:6.6px;color:#b4b8bc;font-weight:normal;letter-spacing:-0.148px;">Position</div>
<div class="abs" style="left:874.5px;top:160.7px;width:48px;height:12px;background:#111417;border-radius:2.5px;"></div>
<div class="abs" style="left:927px;top:160.7px;width:48px;height:12px;background:#111417;border-radius:2.5px;"></div>
<div class="t" style="left:878.6px;top:162px;font-size:5.4px;color:#5a5e63;font-weight:normal;">X</div>
<div class="t" style="left:883.8px;top:162px;font-size:6.4px;color:#d3d6d9;font-weight:normal;letter-spacing:-0.196px;">100.00</div>
<div class="t" style="left:930.6px;top:162px;font-size:5.4px;color:#5a5e63;font-weight:normal;">Y</div>
<div class="t" style="left:935.6px;top:162px;font-size:6.4px;color:#d3d6d9;font-weight:normal;letter-spacing:-0.196px;">100.00</div>
<svg style="left:979.6px;top:162.9px" width="7.8" height="7.8" viewBox="0 0 9 9" fill="none" stroke="#b9bdc1" stroke-width="1" stroke-linecap="round" stroke-linejoin="round"><path d="M2.2 2.6 A3 3 0 1 1 1.6 5.2"/><path d="M1.6 1.2 L2.1 2.8 L3.7 2.5"/></svg>
<svg style="left:999.7px;top:162.5px" width="8.6" height="8.6" viewBox="0 0 9 9" fill="none" stroke="#b9bdc1" stroke-width=".9" stroke-linejoin="round"><path d="M4.5 1.2 L7.8 4.5 L4.5 7.8 L1.2 4.5Z"/></svg>
<div class="t" style="left:815px;top:184px;font-size:6.6px;color:#b4b8bc;font-weight:normal;letter-spacing:-0.241px;">Rotate</div>
<div class="abs" style="left:874.5px;top:182.3px;width:38px;height:12px;background:#111417;border-radius:2.5px;"></div>
<div class="t" style="left:878.1px;top:184px;font-size:6.4px;color:#d3d6d9;font-weight:normal;letter-spacing:-0.124px;">0000.00°</div>
<svg style="left:916px;top:181px" width="14" height="14" viewBox="0 0 14 14"><circle cx="7" cy="7" r="5.6" fill="none" stroke="#6f747a" stroke-width=".8"/><path d="M7 2.4 V7" stroke="#e0e2e4" stroke-width="1.3" stroke-linecap="round"/><path d="M5.9 1.5 H8.1" stroke="#42d9b4" stroke-width="1.2" stroke-linecap="round"/></svg>
<svg style="left:979.6px;top:184.4px" width="7.8" height="7.8" viewBox="0 0 9 9" fill="none" stroke="#b9bdc1" stroke-width="1" stroke-linecap="round" stroke-linejoin="round"><path d="M2.2 2.6 A3 3 0 1 1 1.6 5.2"/><path d="M1.6 1.2 L2.1 2.8 L3.7 2.5"/></svg>
<svg style="left:999.7px;top:184.0px" width="8.6" height="8.6" viewBox="0 0 9 9" fill="none" stroke="#b9bdc1" stroke-width=".9" stroke-linejoin="round"><path d="M4.5 1.2 L7.8 4.5 L4.5 7.8 L1.2 4.5Z"/></svg>
<div class="t" style="left:815px;top:206px;font-size:6.6px;color:#b4b8bc;font-weight:normal;">Flip</div>
<div class="abs" style="left:874.5px;top:203.7px;width:22px;height:12px;background:#202326;border-radius:2.5px;"></div>
<svg style="left:880.5px;top:204.7px" width="10" height="10" viewBox="0 0 10 10" class="ic" stroke-width=".85"><path d="M5 1.6 L8.2 8 H1.8Z"/><path d="M5 3.6 V8" stroke-dasharray="1 1"/></svg>
<div class="abs" style="left:900.5px;top:203.7px;width:22px;height:12px;background:#202326;border-radius:2.5px;"></div>
<svg style="left:906.5px;top:204.7px" width="10" height="10" viewBox="0 0 10 10" class="ic" stroke-width=".85"><path d="M2.6 1.8 L8.4 5 L2.6 8.2Z"/><path d="M2.6 5 H6.5" stroke-dasharray="1 1"/></svg>
<div class="abs" style="left:927px;top:203.7px;width:22px;height:12px;background:#202326;border-radius:2.5px;"></div>
<svg style="left:933px;top:204.7px" width="10" height="10" viewBox="0 0 10 10" class="ic" stroke-width=".85"><rect x="3.4" y="3.4" width="5" height="5" rx=".8"/><path d="M1.6 4.6 V2.6 Q1.6 1.6 2.6 1.6 H4.6 M2.6 .6 L1.6 1.7 L2.7 2.7"/></svg>
<div class="abs" style="left:953px;top:203.7px;width:22px;height:12px;background:#202326;border-radius:2.5px;"></div>
<svg style="left:959px;top:204.7px" width="10" height="10" viewBox="0 0 10 10" class="ic" stroke-width=".85"><rect x="1.6" y="3.4" width="5" height="5" rx=".8"/><path d="M5.4 1.6 H7.4 Q8.4 1.6 8.4 2.6 V4.6 M7.4 .6 L8.4 1.7 L7.3 2.7"/></svg>
<svg style="left:979.6px;top:206.1px" width="7.8" height="7.8" viewBox="0 0 9 9" fill="none" stroke="#b9bdc1" stroke-width="1" stroke-linecap="round" stroke-linejoin="round"><path d="M2.2 2.6 A3 3 0 1 1 1.6 5.2"/><path d="M1.6 1.2 L2.1 2.8 L3.7 2.5"/></svg>
<div class="abs" style="left:815px;top:234.6px;width:13px;height:6px;background:#2b2e32;border-radius:3px;"></div>
<div class="abs" style="left:815.8px;top:235.2px;width:4.8px;height:4.8px;border-radius:50%;background:#c3c6ca"></div>
<div class="t" style="left:830.2px;top:233px;font-size:6.7px;color:#e4e6e8;font-weight:normal;letter-spacing:-0.022px;-webkit-text-stroke:0.3px #e4e6e8;">Compositing</div>
<svg style="left:870.8px;top:235.6px" width="4" height="4" viewBox="0 0 4 4"><path d="M.5 .9 L3.5 .9 L2 3.1Z" fill="#c9ccd0"/></svg>
<svg style="left:999.7px;top:233.29999999999998px" width="8.6" height="8.6" viewBox="0 0 9 9" fill="none" stroke="#3a3e42" stroke-width=".9" stroke-linejoin="round"><path d="M4.5 1.2 L7.8 4.5 L4.5 7.8 L1.2 4.5Z"/></svg>
<div class="t" style="left:815px;top:255px;font-size:6.6px;color:#3f4348;font-weight:normal;letter-spacing:-0.092px;">Blend Mode</div>
<div class="abs" style="left:874.5px;top:253.3px;width:142px;height:12px;background:#111417;border-radius:2.5px;"></div>
<div class="t" style="left:878.1px;top:255px;font-size:6.4px;color:#3f4348;font-weight:normal;letter-spacing:0.062px;">Normal</div>
<svg style="left:1007px;top:257px" width="5" height="4" viewBox="0 0 5 4"><path d="M.8 .8 L2.5 2.8 L4.2 .8" stroke="#3f4348" stroke-width=".8" fill="none"/></svg>
<div class="t" style="left:815px;top:276px;font-size:6.6px;color:#3f4348;font-weight:normal;letter-spacing:-0.168px;">Opacity</div>
<div class="abs" style="left:874px;top:279.6px;width:33px;height:1.4px;background:#3a3e42;border-radius:1px;"></div>
<div class="abs" style="left:907px;top:279.6px;width:34px;height:1.4px;background:#2a2d31;border-radius:1px;"></div>
<div class="abs" style="left:904px;top:277.3px;width:6px;height:6px;border-radius:50%;background:#5a5e63"></div>
<div class="t" style="left:958px;top:276px;font-size:6.4px;color:#3f4348;font-weight:normal;">00.00</div>
<svg style="left:999.7px;top:276.0px" width="8.6" height="8.6" viewBox="0 0 9 9" fill="none" stroke="#34383c" stroke-width=".9" stroke-linejoin="round"><path d="M4.5 1.2 L7.8 4.5 L4.5 7.8 L1.2 4.5Z"/></svg>
<div class="abs" style="left:815px;top:305.0px;width:13.5px;height:6.4px;background:#42d9b4;border-radius:3.2px;"></div>
<div class="abs" style="left:822.6px;top:305.9px;width:4.6px;height:4.6px;border-radius:50%;background:#14201d"></div>
<div class="t" style="left:830.2px;top:304px;font-size:6.7px;color:#e4e6e8;font-weight:normal;letter-spacing:-0.096px;-webkit-text-stroke:0.3px #e4e6e8;">Background</div>
<svg style="left:868.5px;top:306.2px" width="4" height="4" viewBox="0 0 4 4"><path d="M.5 .9 L3.5 .9 L2 3.1Z" fill="#c9ccd0"/></svg>
<svg style="left:979.6px;top:304.3px" width="7.8" height="7.8" viewBox="0 0 9 9" fill="none" stroke="#b9bdc1" stroke-width="1" stroke-linecap="round" stroke-linejoin="round"><path d="M2.2 2.6 A3 3 0 1 1 1.6 5.2"/><path d="M1.6 1.2 L2.1 2.8 L3.7 2.5"/></svg>
<svg style="left:999.7px;top:303.9px" width="8.6" height="8.6" viewBox="0 0 9 9" fill="none" stroke="#b9bdc1" stroke-width=".9" stroke-linejoin="round"><path d="M4.5 1.2 L7.8 4.5 L4.5 7.8 L1.2 4.5Z"/></svg>
<div class="abs" style="left:815px;top:326.5px;width:13px;height:6px;background:#2b2e32;border-radius:3px;"></div>
<div class="abs" style="left:815.8px;top:327.1px;width:4.8px;height:4.8px;border-radius:50%;background:#c3c6ca"></div>
<div class="t" style="left:830.2px;top:325px;font-size:6.7px;color:#e4e6e8;font-weight:normal;letter-spacing:-0.109px;-webkit-text-stroke:0.3px #e4e6e8;">Drop Shadow</div>
<svg style="left:873.1px;top:327.5px" width="4" height="4" viewBox="0 0 4 4"><path d="M.5 .9 L3.5 .9 L2 3.1Z" fill="#c9ccd0"/></svg>
<div class="abs" style="left:815px;top:347.8px;width:13.5px;height:6.4px;background:#42d9b4;border-radius:3.2px;"></div>
<div class="abs" style="left:822.6px;top:348.7px;width:4.6px;height:4.6px;border-radius:50%;background:#14201d"></div>
<div class="t" style="left:830.2px;top:347px;font-size:6.7px;color:#e4e6e8;font-weight:normal;letter-spacing:-0.105px;-webkit-text-stroke:0.3px #e4e6e8;">Video Denoise</div>
<svg style="left:875.8000000000001px;top:349px" width="4" height="4" viewBox="0 0 4 4"><path d="M.5 .9 L3.5 .9 L2 3.1Z" fill="#c9ccd0"/></svg>
<div class="abs" style="left:815px;top:369.5px;width:13px;height:6px;background:#2b2e32;border-radius:3px;"></div>
<div class="abs" style="left:815.8px;top:370.1px;width:4.8px;height:4.8px;border-radius:50%;background:#c3c6ca"></div>
<div class="t" style="left:830.2px;top:368px;font-size:6.7px;color:#e4e6e8;font-weight:normal;letter-spacing:-0.118px;-webkit-text-stroke:0.3px #e4e6e8;">AI Object Remover</div>
<svg style="left:888.3000000000001px;top:370.5px" width="4" height="4" viewBox="0 0 4 4"><path d="M.5 .9 L3.5 .9 L2 3.1Z" fill="#c9ccd0"/></svg>
<div class="abs" style="left:815px;top:391px;width:13px;height:6px;background:#2b2e32;border-radius:3px;"></div>
<div class="abs" style="left:815.8px;top:391.6px;width:4.8px;height:4.8px;border-radius:50%;background:#c3c6ca"></div>
<div class="t" style="left:830.2px;top:390px;font-size:6.7px;color:#e4e6e8;font-weight:normal;letter-spacing:-0.118px;-webkit-text-stroke:0.3px #e4e6e8;">AI Object Remover</div>
<svg style="left:888.3000000000001px;top:392px" width="4" height="4" viewBox="0 0 4 4"><path d="M.5 .9 L3.5 .9 L2 3.1Z" fill="#c9ccd0"/></svg>
<div class="abs" style="left:815px;top:412.3px;width:13px;height:6px;background:#2b2e32;border-radius:3px;"></div>
<div class="abs" style="left:815.8px;top:412.90000000000003px;width:4.8px;height:4.8px;border-radius:50%;background:#c3c6ca"></div>
<div class="t" style="left:830.2px;top:411px;font-size:6.7px;color:#e4e6e8;font-weight:normal;letter-spacing:-0.025px;-webkit-text-stroke:0.3px #e4e6e8;">Stabiliaztion</div>
<svg style="left:869.5px;top:413.3px" width="4" height="4" viewBox="0 0 4 4"><path d="M.5 .9 L3.5 .9 L2 3.1Z" fill="#c9ccd0"/></svg>
<div class="abs" style="left:815px;top:433.7px;width:13px;height:6px;background:#2b2e32;border-radius:3px;"></div>
<div class="abs" style="left:815.8px;top:434.3px;width:4.8px;height:4.8px;border-radius:50%;background:#c3c6ca"></div>
<div class="t" style="left:830.2px;top:432px;font-size:6.7px;color:#e4e6e8;font-weight:normal;letter-spacing:-0.143px;-webkit-text-stroke:0.3px #e4e6e8;">Planer Tracking</div>
<svg style="left:878.1px;top:434.7px" width="4" height="4" viewBox="0 0 4 4"><path d="M.5 .9 L3.5 .9 L2 3.1Z" fill="#c9ccd0"/></svg>
<div class="abs" style="left:815px;top:455px;width:13px;height:6px;background:#2b2e32;border-radius:3px;"></div>
<div class="abs" style="left:815.8px;top:455.6px;width:4.8px;height:4.8px;border-radius:50%;background:#c3c6ca"></div>
<div class="t" style="left:830.2px;top:454px;font-size:6.7px;color:#e4e6e8;font-weight:normal;letter-spacing:-0.146px;-webkit-text-stroke:0.3px #e4e6e8;">Lens Correction</div>
<svg style="left:878.8000000000001px;top:456px" width="4" height="4" viewBox="0 0 4 4"><path d="M.5 .9 L3.5 .9 L2 3.1Z" fill="#c9ccd0"/></svg>
<div class="abs" style="left:815px;top:297px;width:201px;height:1px;background:#202326;border-radius:0px;"></div>
<div class="abs" style="left:815px;top:318.7px;width:201px;height:1px;background:#202326;border-radius:0px;"></div>
<div class="abs" style="left:815px;top:340.2px;width:201px;height:1px;background:#202326;border-radius:0px;"></div>
<div class="abs" style="left:815px;top:361.7px;width:201px;height:1px;background:#202326;border-radius:0px;"></div>
<div class="abs" style="left:815px;top:383.2px;width:201px;height:1px;background:#202326;border-radius:0px;"></div>
<div class="abs" style="left:815px;top:404.7px;width:201px;height:1px;background:#202326;border-radius:0px;"></div>
<div class="abs" style="left:815px;top:426.2px;width:201px;height:1px;background:#202326;border-radius:0px;"></div>
<div class="abs" style="left:815px;top:447.7px;width:201px;height:1px;background:#202326;border-radius:0px;"></div>
<div class="abs" style="left:815px;top:469.2px;width:201px;height:1px;background:#202326;border-radius:0px;"></div>
<div class="abs" style="left:809px;top:552px;width:213px;height:25px;background:#1f2225;border-radius:0px;"></div>
<div class="abs" style="left:978px;top:558.5px;width:38px;height:13px;background:#48dbb8;border-radius:2.5px;"></div>
<div class="t" style="left:847px;width:300px;text-align:center;top:561px;font-size:7px;color:#1d5a4e;font-weight:normal;">Advane</div>
<!-- timeline -->
<div class="panel" style="left:2px;top:310px;width:803px;height:267px;background:#181b1e;border-radius:3px 3px 0 0"></div>
<div class="abs" style="left:2px;top:331px;width:803px;height:1px;background:#141719;border-radius:0px;"></div>
<div class="abs" style="left:2px;top:332px;width:803px;height:17px;background:#191c1f;border-radius:0px;"></div>
<div class="abs" style="left:2px;top:349px;width:60.5px;height:220px;background:#1c1f23;border-radius:0px;"></div>
<div class="abs" style="left:62.5px;top:349px;width:734.5px;height:220px;background:#1f2327;border-radius:0px;"></div>
<div class="abs" style="left:2px;top:374.5px;width:795px;height:1px;background:#1a1d21;border-radius:0px;"></div>
<div class="abs" style="left:2px;top:396px;width:795px;height:1px;background:#1a1d21;border-radius:0px;"></div>
<div class="abs" style="left:2px;top:461px;width:795px;height:1px;background:#1a1d21;border-radius:0px;"></div>
<div class="abs" style="left:62.5px;top:349px;width:1px;height:220px;background:#1a1d21;border-radius:0px;"></div>
<div class="abs" style="left:797px;top:349px;width:7.5px;height:220px;background:#191c20;border-radius:0px;"></div>
<div class="abs" style="left:798.6px;top:376.8px;width:4.8px;height:172.7px;background:#2a2e33;border-radius:2.4px;"></div>
<div class="abs" style="left:798.4px;top:374.2px;width:5.2px;height:5.2px;border-radius:50%;background:#4a4e54"></div>
<div class="abs" style="left:798.4px;top:546.9px;width:5.2px;height:5.2px;border-radius:50%;background:#4a4e54"></div>
<div class="abs" style="left:2px;top:569px;width:803px;height:8px;background:#14171a;border-radius:0px;"></div>
<div class="abs" style="left:100px;top:570.5px;width:330px;height:5px;background:#2a2e33;border-radius:2.5px;"></div>
<div class="abs" style="left:97.4px;top:570.4px;width:5.2px;height:5.2px;border-radius:50%;background:#4a4e54"></div>
<div class="abs" style="left:427.4px;top:570.4px;width:5.2px;height:5.2px;border-radius:50%;background:#4a4e54"></div>
<svg style="left:28px;top:570px" width="6" height="6" viewBox="0 0 6 6"><path d="M3 .8 V5.2 M.8 3 H5.2" stroke="#c9ccd0" stroke-width=".8"/></svg>
<svg style="left:0;top:0" width="1024" height="577" viewBox="0 0 1024 577"><path d="M62.5 342.6 V346.6" stroke="#7d8288" stroke-width=".8"/><path d="M80.2 344.2 V346.2" stroke="#4a4e54" stroke-width=".7"/><path d="M97.8 344.2 V346.2" stroke="#4a4e54" stroke-width=".7"/><path d="M115.5 344.2 V346.2" stroke="#4a4e54" stroke-width=".7"/><path d="M133.1 344.2 V346.2" stroke="#4a4e54" stroke-width=".7"/><path d="M150.8 342.6 V346.6" stroke="#7d8288" stroke-width=".8"/><path d="M168.5 344.2 V346.2" stroke="#4a4e54" stroke-width=".7"/><path d="M186.1 344.2 V346.2" stroke="#4a4e54" stroke-width=".7"/><path d="M203.8 344.2 V346.2" stroke="#4a4e54" stroke-width=".7"/><path d="M221.4 344.2 V346.2" stroke="#4a4e54" stroke-width=".7"/><path d="M239.1 342.6 V346.6" stroke="#7d8288" stroke-width=".8"/><path d="M256.8 344.2 V346.2" stroke="#4a4e54" stroke-width=".7"/><path d="M274.4 344.2 V346.2" stroke="#4a4e54" stroke-width=".7"/><path d="M292.1 344.2 V346.2" stroke="#4a4e54" stroke-width=".7"/><path d="M309.7 344.2 V346.2" stroke="#4a4e54" stroke-width=".7"/><path d="M327.4 342.6 V346.6" stroke="#7d8288" stroke-width=".8"/><path d="M345.1 344.2 V346.2" stroke="#4a4e54" stroke-width=".7"/><path d="M362.7 344.2 V346.2" stroke="#4a4e54" stroke-width=".7"/><path d="M380.4 344.2 V346.2" stroke="#4a4e54" stroke-width=".7"/><path d="M398.0 344.2 V346.2" stroke="#4a4e54" stroke-width=".7"/><path d="M415.7 342.6 V346.6" stroke="#7d8288" stroke-width=".8"/><path d="M433.4 344.2 V346.2" stroke="#4a4e54" stroke-width=".7"/><path d="M451.0 344.2 V346.2" stroke="#4a4e54" stroke-width=".7"/><path d="M468.7 344.2 V346.2" stroke="#4a4e54" stroke-width=".7"/><path d="M486.3 344.2 V346.2" stroke="#4a4e54" stroke-width=".7"/><path d="M504.0 342.6 V346.6" stroke="#7d8288" stroke-width=".8"/><path d="M521.7 344.2 V346.2" stroke="#4a4e54" stroke-width=".7"/><path d="M539.3 344.2 V346.2" stroke="#4a4e54" stroke-width=".7"/><path d="M557.0 344.2 V346.2" stroke="#4a4e54" stroke-width=".7"/><path d="M574.6 344.2 V346.2" stroke="#4a4e54" stroke-width=".7"/><path d="M592.3 342.6 V346.6" stroke="#7d8288" stroke-width=".8"/><path d="M610.0 344.2 V346.2" stroke="#4a4e54" stroke-width=".7"/><path d="M627.6 344.2 V346.2" stroke="#4a4e54" stroke-width=".7"/><path d="M645.3 344.2 V346.2" stroke="#4a4e54" stroke-width=".7"/><path d="M662.9 344.2 V346.2" stroke="#4a4e54" stroke-width=".7"/><path d="M680.6 342.6 V346.6" stroke="#7d8288" stroke-width=".8"/><path d="M698.3 344.2 V346.2" stroke="#4a4e54" stroke-width=".7"/><path d="M715.9 344.2 V346.2" stroke="#4a4e54" stroke-width=".7"/><path d="M733.6 344.2 V346.2" stroke="#4a4e54" stroke-width=".7"/><path d="M751.2 344.2 V346.2" stroke="#4a4e54" stroke-width=".7"/><path d="M768.9 342.6 V346.6" stroke="#7d8288" stroke-width=".8"/><path d="M786.6 344.2 V346.2" stroke="#4a4e54" stroke-width=".7"/></svg>
<div class="t" style="left:62.6px;top:334px;font-size:4.9px;color:#8e9297;font-weight:normal;letter-spacing:0.065px;">00:00:01:00</div>
<div class="t" style="left:150.9px;top:334px;font-size:4.9px;color:#8e9297;font-weight:normal;letter-spacing:0.065px;">00:00:02:00</div>
<div class="t" style="left:239.2px;top:334px;font-size:4.9px;color:#8e9297;font-weight:normal;letter-spacing:0.065px;">00:00:03:00</div>
<div class="t" style="left:327.5px;top:334px;font-size:4.9px;color:#8e9297;font-weight:normal;letter-spacing:0.065px;">00:00:04:00</div>
<div class="t" style="left:415.8px;top:334px;font-size:4.9px;color:#8e9297;font-weight:normal;letter-spacing:0.065px;">00:00:05:00</div>
<div class="t" style="left:504.1px;top:334px;font-size:4.9px;color:#8e9297;font-weight:normal;letter-spacing:0.065px;">00:00:06:00</div>
<div class="t" style="left:592.4px;top:334px;font-size:4.9px;color:#8e9297;font-weight:normal;letter-spacing:0.065px;">00:00:07:00</div>
<div class="t" style="left:680.7px;top:334px;font-size:4.9px;color:#8e9297;font-weight:normal;letter-spacing:0.065px;">00:00:08:00</div>
<div class="t" style="left:769.0px;top:334px;font-size:4.9px;color:#8e9297;font-weight:normal;letter-spacing:0.065px;">00:00:09:00</div>
<svg style="left:6.5px;top:315.1px" width="11" height="11" viewBox="0 0 11 11" class="ic" stroke="#b9bdc1" stroke-width="0.9"><rect x="1.8" y="1.8" width="2.8" height="2.8" rx=".9"/><rect x="6.4" y="1.8" width="2.8" height="2.8" rx=".9"/><rect x="1.8" y="6.4" width="2.8" height="2.8" rx=".9"/><rect x="6.4" y="6.4" width="2.8" height="2.8" rx=".9"/></svg>
<div class="abs" style="left:25px;top:316.5px;width:0.8px;height:8.5px;background:#3a3e42;border-radius:0px;"></div>
<svg style="left:33.5px;top:315.1px" width="11" height="11" viewBox="0 0 11 11" class="ic" stroke="#b9bdc1" stroke-width="0.9"><path d="M2 2 L8.6 4.6 L6.2 5.6 L8 8 L7 8.8 L5.2 6.4 L3.6 8.2 Z"/><path d="M9.2 9.6 h.1" stroke-width="1.3"/></svg>
<svg style="left:52.5px;top:315.1px" width="11" height="11" viewBox="0 0 11 11" class="ic" stroke="#b9bdc1" stroke-width="0.9"><path d="M3 2 L1.6 3.6 L3.2 5"/><path d="M1.8 3.6 H6.6 Q9.2 3.6 9.2 6 Q9.2 8.4 6.6 8.4 H4.4"/></svg>
<svg style="left:71.5px;top:315.1px" width="11" height="11" viewBox="0 0 11 11" class="ic" stroke="#b9bdc1" stroke-width="0.9"><path d="M8 2 L9.4 3.6 L7.8 5"/><path d="M9.2 3.6 H4.4 Q1.8 3.6 1.8 6 Q1.8 8.4 4.4 8.4 H6.6"/></svg>
<svg style="left:90.5px;top:315.1px" width="11" height="11" viewBox="0 0 11 11" class="ic" stroke="#b9bdc1" stroke-width="0.9"><path d="M2 3 H9 M4.2 3 V1.8 H6.8 V3 M2.8 3 L3.2 9 Q3.3 9.4 3.8 9.4 H7.2 Q7.7 9.4 7.8 9 L8.2 3"/><path d="M4.4 5 H6.6 M4.4 7 H6.6"/></svg>
<svg style="left:109.5px;top:315.1px" width="11" height="11" viewBox="0 0 11 11" class="ic" stroke="#b9bdc1" stroke-width="0.9"><circle cx="3" cy="8" r="1.5"/><circle cx="8" cy="8" r="1.5"/><path d="M3.8 6.8 L7.6 1.6 M7.2 6.8 L3.4 1.6"/></svg>
<svg style="left:128.5px;top:315.1px" width="11" height="11" viewBox="0 0 11 11" class="ic" stroke="#b9bdc1" stroke-width="0.9"><path d="M2 3 V1.8 H9 V3 M5.5 1.8 V8.6 M4.2 8.6 H6.8" stroke-width="1.1"/><path d="M9.4 9.4 h.1" stroke-width="1.4"/></svg>
<svg style="left:148.0px;top:315.1px" width="11" height="11" viewBox="0 0 11 11" class="ic" stroke="#b9bdc1" stroke-width="0.9"><rect x="1.8" y="1.8" width="7" height="7" rx="1.6"/><path d="M9.8 9.8 h.1" stroke-width="1.4"/></svg>
<div class="abs" style="left:167px;top:316.5px;width:0.8px;height:8.5px;background:#3a3e42;border-radius:0px;"></div>
<svg style="left:174.5px;top:315.1px" width="11" height="11" viewBox="0 0 11 11" class="ic" stroke="#b9bdc1" stroke-width="0.9"><rect x="1.6" y="1.6" width="7.8" height="7.8" rx="1.4" stroke-dasharray="2.2 1.3"/><circle cx="5.5" cy="4.4" r="1.2"/><path d="M3.4 8 Q5.5 5.4 7.6 8"/></svg>
<svg style="left:193.5px;top:315.1px" width="11" height="11" viewBox="0 0 11 11" class="ic" stroke="#b9bdc1" stroke-width="0.9"><rect x="1.6" y="2.2" width="7" height="7.2" rx="1.4"/><path d="M3.8 4.6 H6.6 M5.2 4.6 V7.6"/><circle cx="8.6" cy="2.4" r="1.2" fill="#16191c"/></svg>
<svg style="left:212.5px;top:315.1px" width="11" height="11" viewBox="0 0 11 11" class="ic" stroke="#b9bdc1" stroke-width="0.9"><rect x="1.6" y="2.2" width="7" height="7.2" rx="1.4"/><rect x="4" y="5" width="2.4" height="2.6" rx=".5"/><path d="M7.6 1.4 V3.6 M6.6 2.4 L7.6 1.4 L8.6 2.4"/></svg>
<svg style="left:231.5px;top:315.1px" width="11" height="11" viewBox="0 0 11 11" class="ic" stroke="#b9bdc1" stroke-width="0.9"><rect x="1.6" y="2.6" width="7.4" height="6.4" rx="1.4"/><path d="M3 6.4 H5 M3 4.8 H4"/><circle cx="7.4" cy="5.6" r="1.3"/><path d="M8 1.6 L9.6 2.4"/></svg>
<svg style="left:251.10000000000002px;top:315.1px" width="11" height="11" viewBox="0 0 11 11" class="ic" stroke="#b9bdc1" stroke-width="0.9"><path d="M1.6 2.6 H6.2 M3.9 1.6 V2.6 M5.4 2.6 Q4.6 5.6 1.8 6.6 M2.6 4 Q3.6 6 5.6 6.6"/><path d="M5.6 9.6 L7.6 4.6 L9.6 9.6 M6.3 8 H8.9"/></svg>
<svg style="left:270.5px;top:315.1px" width="11" height="11" viewBox="0 0 11 11" class="ic" stroke="#b9bdc1" stroke-width="0.9"><path d="M1.8 3 V1.8 H7.6 V3 M4.7 1.8 V8.6 M3.6 8.6 H5.8" stroke-width="1"/><path d="M7 9.4 L8.2 6.4 L9.4 9.4 M9.9 6.6 V9.4" stroke-width=".7"/></svg>
<svg style="left:290.0px;top:315.1px" width="11" height="11" viewBox="0 0 11 11" class="ic" stroke="#b9bdc1" stroke-width="0.9"><path d="M2 2 L6 9 M6 2 L2 9 M1.4 2 H3 M5 2 H6.6 M1.4 9 H3 M5 9 H6.6"/><path d="M7 5.4 H9.6 M7 7.2 H9"/></svg>
<div class="abs" style="left:296.5px;top:312px;width:8px;height:4.2px;border-radius:1.5px;background:linear-gradient(90deg,#ff5fa8,#d86bff)"></div>
<svg style="left:309.5px;top:315.1px" width="11" height="11" viewBox="0 0 11 11" class="ic" stroke="#b9bdc1" stroke-width="0.9"><path d="M2.6 2.4 L5.4 5.5 L2.6 8.6 M6 2.4 L8.8 5.5 L6 8.6"/></svg>
<svg style="left:540.5px;top:315px" width="11" height="11" viewBox="0 0 11 11"><circle cx="5.5" cy="5.5" r="4.8" fill="#42d9b4"/><rect x="2.6" y="3.8" width="5.8" height="3.6" rx="1.4" fill="#14302a"/><circle cx="4.2" cy="5.6" r=".6" fill="#42d9b4"/><circle cx="6.8" cy="5.6" r=".6" fill="#42d9b4"/></svg>
<svg style="left:559.5px;top:315.1px" width="11" height="11" viewBox="0 0 11 11" class="ic" stroke="#b9bdc1" stroke-width="0.9"><circle cx="5.5" cy="5.5" r="3.8" stroke-dasharray="9 2"/><path d="M4.6 4 L6.8 5.5 L4.6 7 Z"/></svg>
<svg style="left:579.5px;top:315.1px" width="11" height="11" viewBox="0 0 11 11" class="ic" stroke="#b9bdc1" stroke-width="0.9"><path d="M2.2 2 H8.8 V6.4 Q8.8 7.6 5.5 9.4 Q2.2 7.6 2.2 6.4 Z"/></svg>
<svg style="left:598.5px;top:315.1px" width="11" height="11" viewBox="0 0 11 11" class="ic" stroke="#b9bdc1" stroke-width="0.9"><rect x="4" y="1.4" width="3" height="5.2" rx="1.5"/><path d="M2.4 5.4 Q2.4 8 5.5 8 Q8.6 8 8.6 5.4 M5.5 8 V9.8 M4.2 9.8 H6.8"/></svg>
<svg style="left:617.5px;top:315.1px" width="11" height="11" viewBox="0 0 11 11" class="ic" stroke="#b9bdc1" stroke-width="0.9"><ellipse cx="5.5" cy="5.5" rx="4" ry="2.4"/><path d="M5.5 3.1 V7.9 M3 5.5 H4 M7 5.5 H8"/></svg>
<svg style="left:637.0px;top:315.1px" width="11" height="11" viewBox="0 0 11 11" class="ic" stroke="#b9bdc1" stroke-width="0.9"><rect x="1.4" y="2.2" width="6" height="6" rx="1.2"/><path d="M4.4 2.2 V8.2"/><circle cx="8.4" cy="8" r="1.6"/><path d="M7.8 8 H9"/></svg>
<svg style="left:656.5px;top:315.1px" width="11" height="11" viewBox="0 0 11 11" class="ic" stroke="#b9bdc1" stroke-width="0.9"><path d="M2.6 1.6 V9.4 M5.5 1.6 V9.4 M8.4 1.6 V9.4" /><path d="M1.6 6.4 H3.6 M4.5 3.6 H6.5 M7.4 6.8 H9.4" stroke-width="1.6"/></svg>
<svg style="left:676.0px;top:315.1px" width="11" height="11" viewBox="0 0 11 11" class="ic" stroke="#b9bdc1" stroke-width="0.9"><rect x="1.4" y="2.4" width="8.2" height="6.2" rx="1.4"/><path d="M3.2 5.5 H4.6 M6.4 5.5 H7.8 M4 4.6 L3.2 5.5 L4 6.4 M7 4.6 L7.8 5.5 L7 6.4" stroke-width=".8"/></svg>
<svg style="left:694.5px;top:315.1px" width="11" height="11" viewBox="0 0 11 11" class="ic" stroke="#b9bdc1" stroke-width="0.8"><circle cx="5.5" cy="5.5" r="3.4"/><path d="M4 5.5 H7"/></svg>
<div class="abs" style="left:709px;top:319.90000000000003px;width:17px;height:1.4px;background:#d9dbdd;border-radius:1px;"></div>
<div class="abs" style="left:726px;top:320.1px;width:17px;height:1px;background:#4a4e54;border-radius:1px;"></div>
<div class="abs" style="left:724px;top:318.6px;width:4px;height:4px;border-radius:50%;background:#16191c;border:1px solid #d9dbdd"></div>
<svg style="left:746.5px;top:315.1px" width="11" height="11" viewBox="0 0 11 11" class="ic" stroke="#b9bdc1" stroke-width="0.8"><circle cx="5.5" cy="5.5" r="3.4"/><path d="M4 5.5 H7 M5.5 4 V7"/></svg>
<div class="abs" style="left:777.5px;top:315.5px;width:2px;height:10px;background:#24282c;border-radius:1px;"></div>
<div class="abs" style="left:781px;top:315.5px;width:2px;height:10px;background:#24282c;border-radius:1px;"></div>
<svg style="left:791.5px;top:319.5px" width="4" height="3" viewBox="0 0 4 3"><path d="M.4 .4 H3.6 L2 2.6Z" fill="#3a3e42"/></svg>
<svg style="left:7.5px;top:335.5px" width="9" height="9" viewBox="0 0 9 9" class="ic" stroke="#b9bdc1" stroke-width="0.85"><path d="M4 5.6 L2.8 6.8 Q1.8 7.8 1 7 Q.4 6.2 1.4 5.2 L2.8 3.8 M5 3.4 L6.2 2.2 Q7.2 1.2 8 2 Q8.6 2.8 7.6 3.8 L6.2 5.2 M2.6 1.4 L6.4 7.6"/></svg>
<svg style="left:22.0px;top:335.5px" width="10" height="9" viewBox="0 0 10 9" class="ic" stroke="#b9bdc1" stroke-width="0.85"><rect x=".8" y="2" width="8.4" height="5.2" rx="1.4"/><path d="M5 3.4 L6.8 4.6 L5 5.8Z" fill="#c9ccd0" stroke-width=".3"/><path d="M2.4 3.6 H3.4 M2.4 5.6 H3.4 M2.4 3.6 V5.6"/></svg>
<svg style="left:37.0px;top:335.5px" width="10" height="9" viewBox="0 0 10 9" class="ic" stroke="#b9bdc1" stroke-width="0.85"><rect x="1.8" y="1.4" width="6.4" height="2.8" rx=".9"/><rect x=".8" y="5.4" width="8.4" height="2.8" rx=".9"/></svg>
<svg style="left:7.6px;top:361.6px" width="8.8" height="8.8" viewBox="0 0 10 10" class="ic" stroke="#a8acb0" stroke-width=".95"><rect x="1.8" y="4.6" width="6.6" height="3.8" rx="1"/><path d="M3 4.6 V3.2 Q3 1.6 4.6 1.6 Q5.8 1.6 6 2.8"/></svg>
<svg style="left:20.6px;top:361.6px" width="8.8" height="8.8" viewBox="0 0 10 10" class="ic" stroke="#a8acb0" stroke-width=".95"><path d="M1.4 3.8 H3 L5.4 1.8 V8.2 L3 6.2 H1.4 Z"/><path d="M7.4 3.4 V6.6" stroke-width="1.3"/></svg>
<svg style="left:33.1px;top:361.6px" width="8.8" height="8.8" viewBox="0 0 10 10" class="ic" stroke="#a8acb0" stroke-width=".95"><path d="M1.8 8.6 L4 6 L7.6 1.6 L8.6 2.6 L5 6.6 Z" fill="#a8acb0" stroke-width=".5"/><path d="M6.2 7.6 h.1 M7.8 5.8 h.1" stroke-width="1"/></svg>
<svg style="left:46.6px;top:361.6px" width="8.8" height="8.8" viewBox="0 0 10 10" class="ic" stroke="#a8acb0" stroke-width=".95"><path d="M.8 5 Q5 .9 9.2 5 Q5 9.1 .8 5Z"/><circle cx="5" cy="5" r="1.5" fill="#a8acb0"/></svg>
<div class="t" style="left:9.2px;top:377px;font-size:4.9px;color:#6a6f74;font-weight:normal;letter-spacing:0.118px;">Video clip 01</div>
<svg style="left:7.6px;top:386.8px" width="8.8" height="8.8" viewBox="0 0 10 10" class="ic" stroke="#a8acb0" stroke-width=".95"><rect x="1.8" y="4.6" width="6.6" height="3.8" rx="1"/><path d="M3 4.6 V3.2 Q3 1.6 4.6 1.6 Q5.8 1.6 6 2.8"/></svg>
<svg style="left:20.6px;top:386.8px" width="8.8" height="8.8" viewBox="0 0 10 10" class="ic" stroke="#a8acb0" stroke-width=".95"><path d="M1.4 3.8 H3 L5.4 1.8 V8.2 L3 6.2 H1.4 Z"/><path d="M7.4 3.4 V6.6" stroke-width="1.3"/></svg>
<svg style="left:33.1px;top:386.8px" width="8.8" height="8.8" viewBox="0 0 10 10" class="ic" stroke="#a8acb0" stroke-width=".95"><path d="M1.8 8.6 L4 6 L7.6 1.6 L8.6 2.6 L5 6.6 Z" fill="#a8acb0" stroke-width=".5"/><path d="M6.2 7.6 h.1 M7.8 5.8 h.1" stroke-width="1"/></svg>
<svg style="left:46.6px;top:386.8px" width="8.8" height="8.8" viewBox="0 0 10 10" class="ic" stroke="#a8acb0" stroke-width=".95"><path d="M.8 5 Q5 .9 9.2 5 Q5 9.1 .8 5Z"/><circle cx="5" cy="5" r="1.5" fill="#a8acb0"/></svg>
<div class="t" style="left:9.2px;top:420px;font-size:4.9px;color:#6a6f74;font-weight:normal;letter-spacing:0.118px;">Video clip 01</div>
<svg style="left:7.6px;top:429.8px" width="8.8" height="8.8" viewBox="0 0 10 10" class="ic" stroke="#a8acb0" stroke-width=".95"><rect x="1.8" y="4.6" width="6.6" height="3.8" rx="1"/><path d="M3 4.6 V3.2 Q3 1.6 4.6 1.6 Q5.8 1.6 6 2.8"/></svg>
<svg style="left:20.6px;top:429.8px" width="8.8" height="8.8" viewBox="0 0 10 10" class="ic" stroke="#a8acb0" stroke-width=".95"><path d="M1.4 3.8 H3 L5.4 1.8 V8.2 L3 6.2 H1.4 Z"/><path d="M7.4 3.4 V6.6" stroke-width="1.3"/></svg>
<svg style="left:33.1px;top:429.8px" width="8.8" height="8.8" viewBox="0 0 10 10" class="ic" stroke="#a8acb0" stroke-width=".95"><path d="M1.8 8.6 L4 6 L7.6 1.6 L8.6 2.6 L5 6.6 Z" fill="#a8acb0" stroke-width=".5"/><path d="M6.2 7.6 h.1 M7.8 5.8 h.1" stroke-width="1"/></svg>
<svg style="left:46.6px;top:429.8px" width="8.8" height="8.8" viewBox="0 0 10 10" class="ic" stroke="#a8acb0" stroke-width=".95"><path d="M.8 5 Q5 .9 9.2 5 Q5 9.1 .8 5Z"/><circle cx="5" cy="5" r="1.5" fill="#a8acb0"/></svg>
<div class="t" style="left:9.2px;top:490px;font-size:4.9px;color:#6a6f74;font-weight:normal;letter-spacing:0.118px;">Video clip 01</div>
<svg style="left:7.6px;top:500.1px" width="8.8" height="8.8" viewBox="0 0 10 10" class="ic" stroke="#a8acb0" stroke-width=".95"><rect x="1.8" y="4.6" width="6.6" height="3.8" rx="1"/><path d="M3 4.6 V3.2 Q3 1.6 4.6 1.6 Q5.8 1.6 6 2.8"/></svg>
<svg style="left:20.6px;top:500.1px" width="8.8" height="8.8" viewBox="0 0 10 10" class="ic" stroke="#a8acb0" stroke-width=".95"><path d="M1.4 3.8 H3 L5.4 1.8 V8.2 L3 6.2 H1.4 Z"/><path d="M7.4 3.4 V6.6" stroke-width="1.3"/></svg>
<svg style="left:33.1px;top:500.1px" width="8.8" height="8.8" viewBox="0 0 10 10" class="ic" stroke="#a8acb0" stroke-width=".95"><path d="M1.8 8.6 L4 6 L7.6 1.6 L8.6 2.6 L5 6.6 Z" fill="#a8acb0" stroke-width=".5"/><path d="M6.2 7.6 h.1 M7.8 5.8 h.1" stroke-width="1"/></svg>
<svg style="left:46.6px;top:500.1px" width="8.8" height="8.8" viewBox="0 0 10 10" class="ic" stroke="#a8acb0" stroke-width=".95"><path d="M.8 5 Q5 .9 9.2 5 Q5 9.1 .8 5Z"/><circle cx="5" cy="5" r="1.5" fill="#a8acb0"/></svg>
<div class="abs" style="left:181px;top:378px;width:206.5px;height:15.5px;background:#583b94;border-radius:1.5px;"></div>
<div class="t" style="left:134.0119031464041px;width:300px;text-align:center;top:381px;font-size:5.8px;color:#ece6f8;font-weight:normal;letter-spacing:0.024px;">Is there something I can do before running the clips to split all videos?</div>
<div class="abs" style="left:389px;top:378px;width:32.5px;height:15.5px;background:#583b94;border-radius:1.5px;"></div>
<div class="t" style="left:392px;top:381px;font-size:5.8px;color:#ece6f8;font-weight:normal;letter-spacing:0.020px;">Is there</div>
<div class="abs" style="left:180px;top:398.3px;width:364.8px;height:61.2px;border-radius:2px;overflow:hidden;background:#1b4a41">
<svg style="left:0;top:0" width="365" height="62" viewBox="0 0 365 62">
<rect x="0" y="9.7" width="365" height="34.4" fill="url(#sky3)"/><use href="#tscene" x="-0.6" y="9.7" width="51.4" height="34.4"/><use href="#tscene" x="50.7" y="9.7" width="51.4" height="34.4"/><use href="#tscene" x="102.0" y="9.7" width="51.4" height="34.4"/><use href="#tscene" x="153.3" y="9.7" width="51.4" height="34.4"/><use href="#tscene" x="204.6" y="9.7" width="51.4" height="34.4"/><use href="#tscene" x="255.9" y="9.7" width="51.4" height="34.4"/><use href="#tscene" x="307.2" y="9.7" width="51.4" height="34.4"/><use href="#tscene" x="358.5" y="9.7" width="51.4" height="34.4"/>
<rect x="0" y="44" width="365" height="18" fill="#1a4a40"/>
<path d="M0 62 L0 53 L0.0 53.7 L1.9 54.1 L3.3 55.2 L5.0 56.0 L7.1 55.4 L9.6 54.2 L12.5 54.7 L15.1 54.8 L17.5 51.2 L20.4 54.6 L23.4 56.8 L25.3 55.3 L28.4 54.3 L29.9 55.8 L32.0 52.5 L34.2 52.8 L36.5 55.5 L39.1 56.6 L42.3 51.8 L45.2 56.7 L47.6 54.6 L50.4 52.4 L51.7 57.0 L53.1 55.2 L54.6 54.8 L57.6 54.1 L58.9 55.0 L61.8 55.5 L65.0 51.4 L67.4 52.0 L69.4 51.8 L70.7 54.9 L73.8 55.1 L76.0 54.2 L78.3 54.1 L81.4 53.2 L84.1 52.5 L87.2 53.7 L88.4 53.9 L89.7 54.2 L91.0 53.3 L93.6 54.5 L96.2 51.3 L98.8 54.8 L100.9 52.6 L102.8 52.8 L105.2 52.9 L108.0 53.8 L110.6 52.1 L113.4 51.9 L115.5 51.5 L117.4 55.2 L119.4 54.5 L121.3 55.4 L123.4 51.6 L125.7 55.0 L128.6 52.4 L131.4 55.0 L133.3 52.5 L136.0 52.7 L138.1 53.0 L141.1 51.0 L144.2 57.0 L146.3 56.8 L147.9 56.5 L150.4 52.4 L152.3 51.3 L154.7 55.1 L156.0 56.1 L159.0 56.7 L161.4 54.7 L162.9 54.3 L165.2 55.7 L167.6 52.3 L170.5 54.9 L172.4 53.7 L175.3 55.0 L178.3 56.5 L179.5 55.3 L180.8 52.3 L183.1 53.4 L185.8 51.3 L187.3 51.3 L190.4 54.3 L192.6 52.6 L194.5 53.9 L196.5 52.6 L197.9 54.6 L199.9 51.9 L201.8 54.9 L203.8 55.9 L205.8 53.5 L208.5 54.5 L210.6 53.7 L213.2 53.1 L215.2 56.8 L217.2 56.4 L218.9 51.6 L221.7 55.4 L224.5 54.7 L226.8 53.9 L228.0 54.9 L229.3 51.5 L232.3 51.1 L235.2 55.2 L237.7 56.9 L240.1 54.1 L242.8 54.6 L244.2 56.8 L245.5 53.8 L248.4 51.9 L250.1 54.8 L252.1 53.0 L254.0 51.4 L256.2 55.2 L258.9 54.5 L261.6 53.6 L263.8 55.5 L265.3 54.7 L268.3 53.2 L270.9 52.3 L272.5 52.6 L274.2 55.8 L276.0 55.2 L278.9 52.3 L280.5 53.4 L282.5 52.8 L284.3 54.4 L287.5 54.0 L289.7 56.5 L292.0 54.6 L294.9 54.7 L298.0 52.1 L299.7 56.0 L302.8 54.7 L304.4 51.9 L307.0 56.7 L308.7 54.9 L310.7 54.3 L312.1 54.9 L314.0 54.4 L315.3 53.2 L317.4 53.9 L320.5 53.7 L322.0 54.3 L323.4 56.7 L324.8 55.1 L327.5 54.9 L330.1 55.0 L331.8 56.9 L334.4 51.6 L336.6 54.6 L339.1 51.9 L341.6 51.9 L344.6 51.6 L347.6 52.7 L350.3 53.8 L352.8 52.6 L354.3 54.6 L357.0 54.7 L359.0 52.9 L361.9 53.5 L363.6 55.1 L365 53 L365 62Z" fill="#3d9a84"/>
<path d="M2.0 51.5 V48.3 M5.0 51.5 V47.1 M6.8 51.5 V50.1 M11.4 51.5 V49.7 M19.6 51.5 V48.9 M21.5 51.5 V48.2 M23.4 51.5 V47.4 M44.1 51.5 V47.4 M47.0 51.5 V48.4 M49.4 51.5 V48.4 M51.0 51.5 V47.9 M61.3 51.5 V49.1 M63.2 51.5 V48.3 M66.6 51.5 V47.0 M69.5 51.5 V47.1 M85.5 51.5 V50.3 M87.2 51.5 V49.9 M92.3 51.5 V47.9 M94.4 51.5 V47.5 M96.7 51.5 V46.9 M99.6 51.5 V49.0 M104.1 51.5 V49.7 M107.2 51.5 V48.7 M109.1 51.5 V49.8 M111.4 51.5 V50.4 M113.1 51.5 V48.5 M114.7 51.5 V48.7 M118.6 51.5 V48.9 M122.1 51.5 V48.6 M126.1 51.5 V50.3 M129.1 51.5 V47.3 M133.6 51.5 V49.4 M138.9 51.5 V47.8 M143.9 51.5 V50.1 M145.7 51.5 V50.3 M157.8 51.5 V48.1 M161.2 51.5 V49.3 M164.4 51.5 V48.9 M169.9 51.5 V47.5 M177.7 51.5 V49.6 M180.8 51.5 V49.4 M187.6 51.5 V49.9 M190.5 51.5 V48.6 M195.2 51.5 V47.1 M201.3 51.5 V46.9 M204.2 51.5 V49.0 M205.9 51.5 V46.7 M209.3 51.5 V47.9 M211.3 51.5 V49.9 M215.6 51.5 V46.6 M225.2 51.5 V49.8 M228.5 51.5 V46.6 M232.1 51.5 V49.6 M241.3 51.5 V48.1 M243.7 51.5 V47.2 M248.3 51.5 V48.6 M251.2 51.5 V49.1 M253.7 51.5 V48.3 M256.7 51.5 V47.9 M259.4 51.5 V49.1 M262.9 51.5 V48.8 M264.6 51.5 V49.8 M276.5 51.5 V46.7 M287.9 51.5 V46.8 M289.8 51.5 V47.6 M291.9 51.5 V47.9 M295.5 51.5 V49.1 M300.5 51.5 V49.3 M302.9 51.5 V49.9 M312.6 51.5 V49.9 M314.7 51.5 V48.4 M317.3 51.5 V47.1 M319.4 51.5 V47.0 M322.5 51.5 V49.5 M325.6 51.5 V50.0 M328.2 51.5 V49.8 M329.8 51.5 V47.4 M336.8 51.5 V50.4 M339.2 51.5 V50.3 M341.8 51.5 V49.3 M346.1 51.5 V50.3 M354.5 51.5 V50.0 M362.6 51.5 V49.8 " stroke="#3d9a84" stroke-width="1" fill="none"/>
<path d="M0 51.3 H365" stroke="#bfeee0" stroke-width=".7" opacity=".85"/>
</svg>
<svg style="left:4px;top:2.2px" width="7" height="6" viewBox="0 0 7 6"><rect x=".2" y=".2" width="6.6" height="5.6" rx="1.2" fill="#e0e8e6"/><path d="M2.6 1.6 L4.8 3 L2.6 4.4Z" fill="#1b4a41"/></svg>
</div>
<div class="abs" style="left:313px;top:462.4px;width:351.5px;height:62px;border-radius:2px;overflow:hidden;background:#1c5448">
<svg style="left:0;top:0" width="352" height="62" viewBox="0 0 352 62"><path d="M0 62 L0 40 L0.0 39.3 L1.1 39.4 L2.2 44.9 L3.0 45.0 L4.4 39.5 L5.1 37.0 L6.0 36.0 L7.4 38.0 L8.6 36.0 L10.1 40.2 L11.0 32.9 L12.0 39.0 L13.4 30.1 L14.5 45.0 L15.8 29.0 L17.3 35.2 L18.1 27.3 L19.2 28.6 L20.0 31.5 L20.9 26.7 L21.8 37.2 L23.2 29.6 L24.1 22.8 L25.0 17.5 L25.9 27.7 L27.4 24.3 L28.2 17.9 L29.1 17.3 L30.0 40.5 L31.0 12.9 L31.9 28.6 L33.1 15.8 L33.8 15.5 L35.0 17.5 L35.8 19.8 L36.7 23.4 L38.2 41.1 L39.3 21.1 L40.6 38.5 L41.7 30.6 L42.4 26.4 L43.7 31.9 L44.7 32.1 L45.7 35.6 L46.9 25.3 L47.7 32.7 L49.0 27.7 L50.0 36.0 L50.8 32.2 L52.0 31.6 L52.9 26.7 L53.8 30.2 L54.8 38.9 L55.7 34.0 L57.1 33.9 L57.9 36.2 L59.2 40.2 L60.2 34.0 L61.4 36.4 L62.9 43.3 L63.7 39.4 L65.0 35.5 L65.7 42.8 L66.9 38.9 L68.3 41.8 L69.3 36.0 L70.6 36.3 L71.9 38.4 L72.9 45.0 L74.2 34.9 L75.6 35.6 L76.9 40.6 L77.8 38.6 L79.1 32.9 L80.6 34.7 L82.0 43.2 L83.1 43.3 L83.9 35.7 L85.2 23.3 L86.5 37.3 L87.6 38.6 L88.7 22.7 L89.8 35.9 L90.8 36.7 L92.2 40.2 L93.1 23.7 L93.8 40.1 L95.1 23.2 L95.9 21.7 L97.3 18.2 L98.7 36.3 L99.5 31.7 L100.2 9.4 L101.2 21.0 L102.0 18.3 L103.1 16.2 L104.2 8.8 L105.5 21.4 L106.8 13.1 L108.3 14.8 L109.1 45.0 L110.4 14.8 L111.5 31.7 L112.7 14.6 L114.1 39.1 L115.4 27.1 L116.2 19.3 L117.3 28.6 L118.2 38.4 L118.9 25.4 L120.3 28.1 L121.3 31.8 L122.7 29.1 L123.7 29.4 L124.4 40.6 L125.8 36.1 L126.9 42.2 L128.3 39.4 L129.4 41.5 L130.7 38.8 L131.4 40.2 L132.6 36.4 L133.9 34.4 L135.0 35.1 L136.3 45.0 L137.6 34.0 L138.6 27.5 L139.7 33.1 L141.2 39.9 L142.5 24.9 L143.6 23.3 L144.3 39.5 L145.5 23.7 L146.6 22.5 L147.4 19.2 L148.7 23.4 L149.4 45.0 L150.4 24.7 L151.6 39.5 L153.0 40.2 L154.1 13.9 L154.9 21.1 L155.8 24.5 L156.9 42.7 L157.8 14.6 L159.0 17.7 L160.2 25.8 L161.0 18.0 L162.4 13.2 L163.5 26.3 L164.2 16.8 L165.4 21.9 L166.4 37.2 L167.8 30.5 L168.8 23.7 L170.0 40.6 L171.3 39.0 L172.1 42.7 L173.2 33.6 L174.0 32.6 L175.2 39.5 L176.5 30.4 L177.7 41.4 L178.7 37.8 L179.7 41.7 L180.7 34.1 L181.7 34.3 L182.9 39.9 L184.2 45.0 L185.3 39.5 L186.7 36.7 L187.4 37.4 L188.2 37.7 L189.4 35.5 L190.5 38.9 L192.0 38.0 L193.3 39.3 L194.6 38.2 L196.0 41.1 L197.1 37.6 L198.2 30.4 L199.2 28.0 L200.1 39.5 L200.9 34.8 L201.6 30.4 L202.4 24.3 L203.3 34.5 L204.1 24.4 L205.1 30.4 L206.0 39.2 L207.1 40.0 L207.8 40.6 L209.0 25.6 L210.2 18.2 L211.2 34.5 L212.0 16.8 L213.4 24.8 L214.3 23.6 L215.0 35.3 L215.8 24.0 L216.9 39.9 L217.8 32.8 L218.6 33.6 L219.7 17.3 L220.6 15.2 L221.9 26.5 L223.0 41.2 L223.7 22.9 L224.8 23.3 L226.2 21.4 L227.2 27.5 L228.2 31.1 L229.5 27.1 L230.8 31.6 L231.5 34.3 L232.6 42.0 L233.4 34.5 L234.4 32.9 L235.8 31.3 L236.5 33.1 L237.8 41.4 L238.8 35.5 L239.9 39.7 L240.7 39.9 L241.7 35.4 L243.2 37.9 L244.1 41.4 L244.8 36.7 L245.8 40.5 L246.6 40.2 L247.7 38.4 L249.2 42.4 L250.0 39.1 L250.9 38.2 L252.0 32.2 L253.5 41.1 L254.7 37.2 L256.1 29.3 L256.9 32.3 L258.0 30.1 L259.2 35.5 L260.4 30.3 L261.6 36.2 L263.1 38.0 L264.2 31.0 L265.3 27.3 L266.0 34.0 L267.2 32.6 L268.0 18.9 L269.0 18.2 L269.9 20.1 L270.6 39.4 L272.0 22.9 L273.3 33.8 L274.1 30.2 L275.1 17.7 L276.4 20.2 L277.2 15.9 L278.3 40.2 L279.1 20.1 L280.0 34.6 L280.8 38.2 L282.0 23.1 L283.3 22.5 L284.6 20.2 L285.6 19.2 L286.9 21.4 L288.1 35.0 L289.5 30.5 L291.0 33.0 L291.7 40.9 L292.9 27.6 L293.8 36.3 L295.1 30.0 L295.9 45.0 L297.2 34.8 L298.1 36.2 L299.3 38.8 L300.7 38.1 L301.5 38.2 L302.4 37.6 L303.7 36.3 L304.9 36.6 L306.2 39.9 L307.0 36.7 L308.0 45.0 L309.2 38.6 L310.0 34.6 L311.2 36.1 L312.0 38.4 L312.8 38.7 L313.6 34.1 L315.0 30.9 L316.5 29.6 L317.3 35.8 L318.2 37.5 L319.5 34.4 L320.7 25.6 L321.6 27.2 L322.4 31.2 L323.6 37.2 L324.7 24.2 L326.0 17.5 L327.2 14.7 L328.2 16.7 L329.5 34.1 L330.2 26.9 L331.0 10.3 L332.4 26.6 L333.2 37.6 L334.5 34.8 L335.5 6.4 L336.8 15.8 L337.7 2.8 L338.4 9.2 L339.2 24.6 L340.5 4.6 L341.7 12.6 L342.6 9.3 L343.4 5.6 L344.7 39.5 L346.1 11.3 L347.6 34.2 L348.4 23.1 L349.3 20.9 L350.4 20.9 L351.3 14.8 L351.5 38 L351.5 62Z" fill="#3e9c86"/><path d="M0 52 H352" stroke="#58c8aa" stroke-width=".8"/></svg>
<svg style="left:3px;top:2.6px" width="7" height="7" viewBox="0 0 7 7"><path d="M2.2 5.2 V1.4 L6 .8 V4.6" stroke="#e0e8e6" stroke-width=".9" fill="none"/><circle cx="1.5" cy="5.3" r="1.1" fill="#e0e8e6"/><circle cx="5.3" cy="4.7" r="1.1" fill="#e0e8e6"/></svg>
</div>
<div class="t" style="left:193px;top:398px;font-size:5.6px;color:#dceae6;font-weight:normal;letter-spacing:-0.065px;">DJI_202507112...2311_0518_D.mp4</div>
<div class="t" style="left:324.8px;top:463px;font-size:5.8px;color:#dceae6;font-weight:normal;letter-spacing:-0.044px;">A woman stand..in the house.mp3</div>
<div class="abs" style="left:374.1px;top:334px;width:1px;height:243px;background:#f26a5e;border-radius:0px;"></div>
<svg style="left:370.5px;top:330.5px" width="8" height="8" viewBox="0 0 8 8"><path d="M1.2 .6 H6.8 Q7.4 .6 7.4 1.2 V4.4 L4 7.4 L.6 4.4 V1.2 Q.6 .6 1.2 .6Z" fill="#f26a5e"/></svg>
<svg style="left:368.5px;top:445px" width="12" height="18" viewBox="0 0 12 18"><rect x=".5" y=".5" width="11" height="17" rx="5.5" fill="#f26a5e"/><g stroke="#fff" stroke-width=".8" fill="none" stroke-linecap="round"><circle cx="4.2" cy="12" r="1.3"/><circle cx="7.8" cy="12" r="1.3"/><path d="M4.8 10.9 L7.8 4.6 M7.2 10.9 L4.2 4.6"/></g></svg>
</body></html>
